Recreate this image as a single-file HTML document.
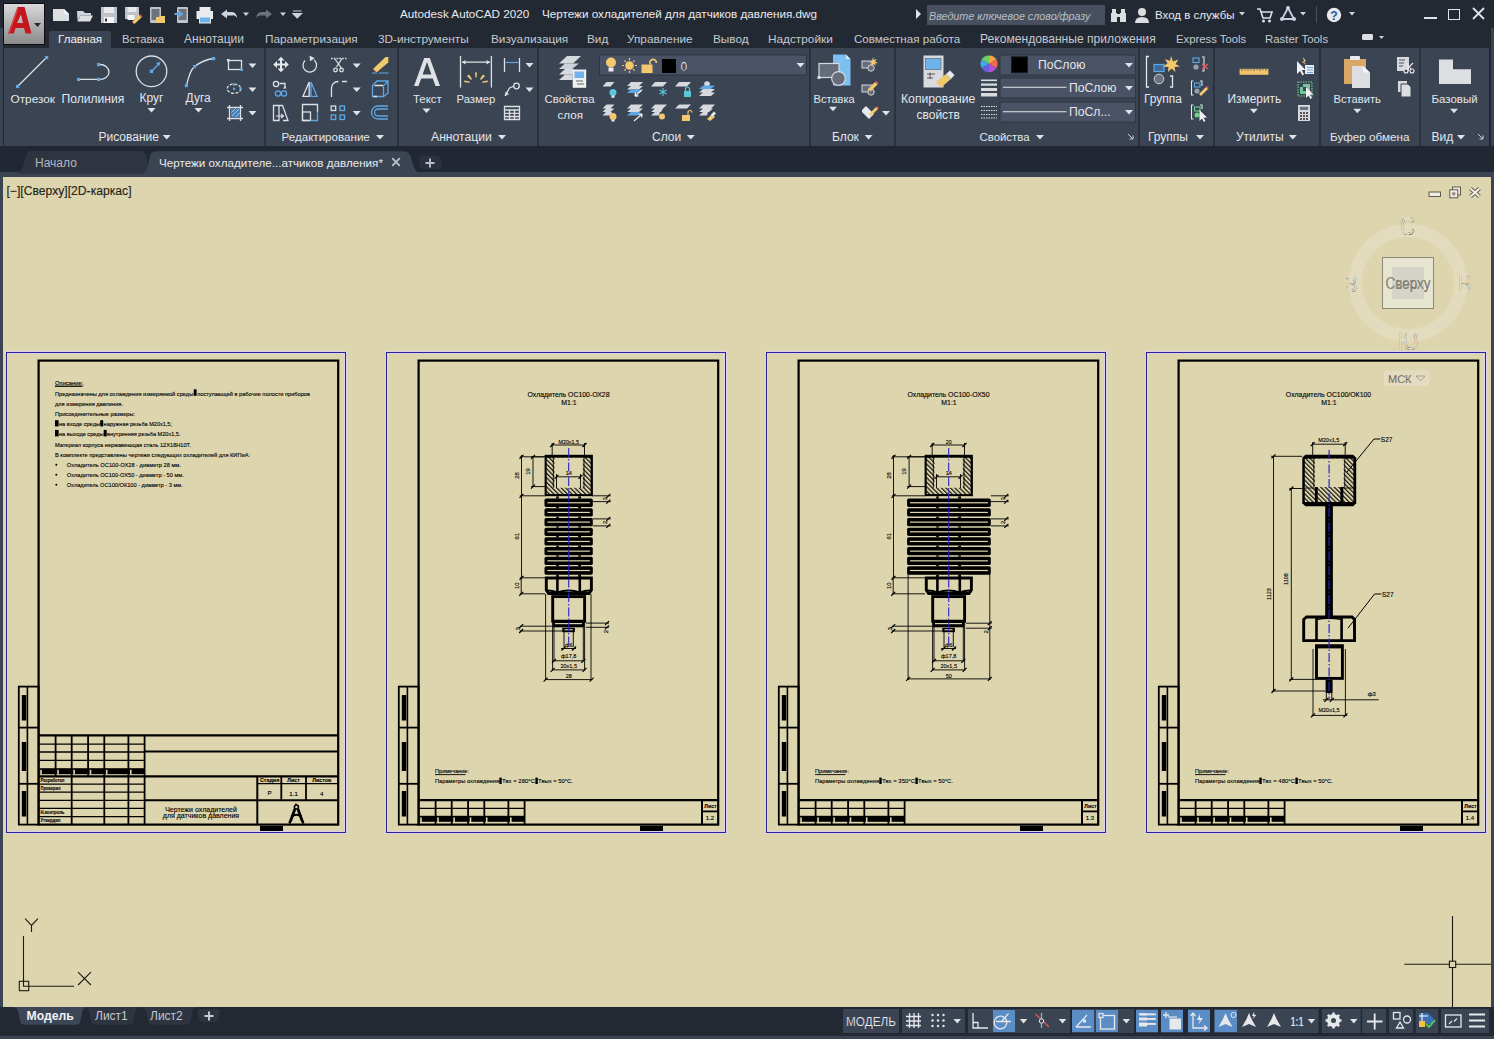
<!DOCTYPE html>
<html><head><meta charset="utf-8">
<style>
*{margin:0;padding:0;box-sizing:border-box}
html,body{width:1494px;height:1039px;overflow:hidden;background:#222833;font-family:"Liberation Sans",sans-serif}
.a{position:absolute}
.t{position:absolute;white-space:nowrap;color:#e3e6eb;font-size:12px;line-height:14px}
#title{left:0;top:0;width:1494px;height:28px;background:#232933}
#tabs{left:0;top:28px;width:1494px;height:20px;background:#232933}
#ribbon{left:4px;top:48px;width:1485px;height:98px;background:#3b4453}
#strip{left:0;top:146px;width:1494px;height:31px;background:#222833}
#frame{left:0;top:172px;width:1494px;height:835px;background:#3b4453}
#vp{left:3px;top:177px;width:1488px;height:830px;background:#ddd5ae}
#bottom{left:0;top:1007px;width:1494px;height:29px;background:#232933}
#bstrip{left:0;top:1036px;width:1494px;height:3px;background:#3b4453}
.sep{position:absolute;top:48px;width:2px;height:98px;background:#2c323d}
.pl{position:absolute;top:130px;font-size:12px;line-height:14px;color:#e3e6eb;white-space:nowrap}
.tri{position:absolute;width:0;height:0;border-left:4px solid transparent;border-right:4px solid transparent;border-top:5px solid #dfe3e8}
.tab{position:absolute;top:32px;font-size:12px;line-height:14px;color:#c4c9d1;white-space:nowrap}
.lb{position:absolute;font-size:12px;line-height:14px;color:#e3e6eb;white-space:nowrap}

</style></head><body>
<div id="title" class="a"></div>
<div id="tabs" class="a"></div>
<div class="a" style="left:0;top:28px;width:3px;height:979px;background:#3b4453"></div>
<div class="a" style="right:0;top:28px;width:3px;height:979px;background:#3b4453"></div>
<div id="ribbon" class="a"></div>
<div id="strip" class="a"></div>
<div id="frame" class="a"></div>
<div id="vp" class="a"></div>
<div id="bottom" class="a"></div>
<div id="bstrip" class="a"></div>
<!-- title bar -->
<div class="a" style="left:3px;top:3px;width:42px;height:42px;background:#0c0e12"></div>
<div class="a" style="left:4px;top:4px;width:40px;height:40px;background:linear-gradient(#d9d9d9,#a9a9a9 60%,#8a8a8a)"></div>
<svg class="a" style="left:4px;top:4px" width="40" height="41" viewBox="0 0 40 41">
<path d="M4 29.5 L13.5 3 L20.5 3 L27.5 29.5 L21.5 29.5 L20 24 L11.5 24 L9.8 29.5 Z M13 19 L19 19 L17 10.5 Z" fill="#c4161c"/>
<path d="M5 29 L14 4.5" stroke="#f07070" stroke-width="1.4" opacity=".5"/>
<path d="M30 19 L37 19 L33.5 23 Z" fill="#2a2a2a"/>
</svg>
<div class="t" style="left:400px;top:7px;font-size:11.7px;color:#e8eaee">Autodesk AutoCAD 2020</div>
<div class="t" style="left:542px;top:7px;font-size:11.7px;color:#e8eaee">Чертежи охладителей для датчиков давления.dwg</div>
<svg class="a" style="left:916px;top:9px" width="6" height="10"><path d="M0 0 L5 5 L0 10Z" fill="#e0e3e8"/></svg>
<div class="a" style="left:927px;top:5px;width:178px;height:20px;background:#48505f"></div>
<div class="t" style="left:929px;top:8.5px;font-size:10.75px;font-style:italic;color:#b9bec6">Введите ключевое слово/фразу</div>
<div class="t" style="left:1155px;top:8px;font-size:11.5px;color:#e8eaee">Вход в службы</div>
<!-- window buttons -->
<div class="a" style="left:1424px;top:17px;width:13px;height:2px;background:#e0e3e8"></div>
<div class="a" style="left:1448px;top:9px;width:12px;height:11px;border:1.5px solid #e0e3e8"></div>
<svg class="a" style="left:1472px;top:7px" width="13" height="13"><path d="M1 1 L12 12 M12 1 L1 12" stroke="#e0e3e8" stroke-width="1.8"/></svg>
<div class="a" style="left:1316px;top:6px;width:1px;height:17px;background:#4a505c"></div>
<!-- tabs -->
<div class="a" style="left:49px;top:31px;width:62px;height:17px;background:#3b4453;border-radius:2px 2px 0 0"></div>
<div class="tab" style="left:58px;color:#f0f2f5;font-size:11.6px">Главная</div>
<div class="tab" style="left:122px;font-size:11.3px">Вставка</div>
<div class="tab" style="left:184px">Аннотации</div>
<div class="tab" style="left:265px;font-size:11.8px">Параметризация</div>
<div class="tab" style="left:378px;font-size:11.8px">3D-инструменты</div>
<div class="tab" style="left:491px;font-size:11.8px">Визуализация</div>
<div class="tab" style="left:587px;font-size:11.8px">Вид</div>
<div class="tab" style="left:627px;font-size:11.8px">Управление</div>
<div class="tab" style="left:713px;font-size:11.8px">Вывод</div>
<div class="tab" style="left:768px;font-size:11.8px">Надстройки</div>
<div class="tab" style="left:854px;font-size:11.6px">Совместная работа</div>
<div class="tab" style="left:980px;font-size:12.1px">Рекомендованные приложения</div>
<div class="tab" style="left:1176px;font-size:11.3px">Express Tools</div>
<div class="tab" style="left:1265px;font-size:11.4px">Raster Tools</div>
<!-- separators -->
<div class="sep" style="left:264px"></div>
<div class="sep" style="left:397px"></div>
<div class="sep" style="left:537px"></div>
<div class="sep" style="left:809px"></div>
<div class="sep" style="left:894px"></div>
<div class="sep" style="left:1138px"></div>
<div class="sep" style="left:1213px"></div>
<div class="sep" style="left:1319px"></div>
<div class="sep" style="left:1419px"></div>
<!-- file tabs -->
<svg class="a" style="left:0;top:140px" width="460" height="40" viewBox="0 140 460 40">
<path d="M13 174 C20 174 22 171 23.5 165 L26 156 C27 152 29 151 33 151 H139 C144 151 146 153 146.5 157 L148 165 C149.5 171 151 174 157 174Z" fill="#2f3540"/>
<path d="M138 177 V174 C145 174 147 171 148 165 L150 156 C151 152 153 151.2 157 151.2 H403 C407 151.2 409 152.5 410.5 156 L413 164 C415 171 418 174 425 174 V177Z" fill="#3b4453"/>
<path d="M422 156 H436 C439 156 440 158 441 161 L442 166 C442.5 168.5 441 169 438 169 H424 C421 169 420 167 419.5 165 L419 160 C419 157 420 156 422 156Z" fill="#2c323d"/>
</svg>
<div class="t" style="left:35px;top:156px;color:#b3b8c0">Начало</div>
<div class="t" style="left:159px;top:156px;font-size:11.65px;color:#e8eaee">Чертежи охладителе...атчиков давления*</div>
<svg class="a" style="left:391px;top:157px" width="10" height="10"><path d="M1.2 1.2 L8.8 8.8 M8.8 1.2 L1.2 8.8" stroke="#b9bfc8" stroke-width="1.9"/></svg>
<svg class="a" style="left:425px;top:157.5px" width="10" height="10"><path d="M5 0.5 V9.5 M0.5 5 H9.5" stroke="#b9bfc8" stroke-width="1.9"/></svg>
<!-- layout tabs -->
<svg class="a" style="left:0;top:1007px" width="240" height="20" viewBox="0 1007 240 20">
<path d="M12 1007 C16 1007 17.5 1009 18.5 1013 L20 1021 C21 1024 22.5 1024.7 25 1024.7 H76 C78.5 1024.7 79.5 1024 80.5 1021 L82 1013 C83 1009 84 1007 88 1007Z" fill="#3d4657"/>
<path d="M83 1007 C87 1007 88.5 1009 89.5 1013 L91 1021 C92 1024 93.5 1024.7 96 1024.7 H129 C131.5 1024.7 132.5 1024 133.5 1021 L135 1013 C136 1009 137 1007 141 1007Z" fill="#2f3540"/>
<path d="M140 1007 C144 1007 145.5 1009 146.5 1013 L148 1021 C149 1024 150.5 1024.7 153 1024.7 H186 C188.5 1024.7 189.5 1024 190.5 1021 L192 1013 C193 1009 194 1007 198 1007Z" fill="#2f3540"/>
<path d="M199 1009 H217 C219.5 1009 220 1010 219.5 1012 L218.5 1018 C218 1021 216.5 1022 214 1022 H203 C200.5 1022 199.5 1021 199 1018 L198 1012 C197.5 1010 198 1009 199 1009Z" fill="#2f3540"/>
</svg>
<div class="t" style="left:26.5px;top:1009px;font-weight:bold;color:#f0f2f5;font-size:12.2px">Модель</div>
<div class="t" style="left:95px;top:1009px;color:#c4c9d1">Лист1</div>
<div class="t" style="left:150px;top:1009px;color:#c4c9d1">Лист2</div>
<svg class="a" style="left:204px;top:1010.5px" width="10" height="10"><path d="M5 0.5 V9.5 M0.5 5 H9.5" stroke="#c9ced6" stroke-width="1.9"/></svg>

<svg class="a" style="left:0;top:0" width="1494" height="150" viewBox="0 0 1494 150">
<g fill="none" stroke="#dcdfe4" stroke-width="1.3">
<!-- Otrezok -->
<path d="M18 86 L46.5 57.5"/>
<!-- Polyline -->
<path d="M79 79.4 H98.5 M100 64.5 A9 7.45 0 0 1 100 79.4"/>
<!-- circle -->
<circle cx="151.5" cy="71.3" r="15.3"/>
<path d="M152 71 L159 63.5" stroke="#5ea8e6"/>
<!-- arc -->
<path d="M186.5 85.5 Q190 70 194.5 66.5 Q203 60 213.5 58.5"/>
<!-- rect -->
<rect x="228.5" y="60.5" width="13" height="9"/>
<!-- ellipse -->
<ellipse cx="234" cy="88.7" rx="6.8" ry="4.6" stroke-dasharray="3 1.5"/>
<!-- hatch -->
<path d="M229.5 105 V121 M240.5 105 V121 M227 107.5 H243 M227 118.5 H243"/>
</g>
<g fill="#5ea8e6">
<rect x="45" y="56" width="3.2" height="3.2"/><rect x="16" y="84.8" width="3.2" height="3.2"/>
<rect x="77" y="77.8" width="3.2" height="3.2"/><rect x="97" y="77.8" width="3.2" height="3.2"/><rect x="97" y="63" width="3.2" height="3.2"/>
<rect x="149.8" y="69.6" width="3.4" height="3.4"/><path d="M160.5 61.8 L156 63 L159.3 66.3Z"/>
<rect x="184.8" y="84" width="3.2" height="3.2"/><rect x="193" y="65" width="3.2" height="3.2"/><rect x="212" y="57" width="3.2" height="3.2"/>
<rect x="227" y="59" width="2.5" height="2.5" fill="#dcdfe4"/><rect x="240.5" y="68.5" width="2.5" height="2.5"/>
<rect x="233" y="87.7" width="2.2" height="2.2"/><rect x="233" y="83.5" width="2.2" height="2.2"/><rect x="239.5" y="87.7" width="2.2" height="2.2"/>
<rect x="231" y="108.5" width="9" height="9" fill="#4a82b8"/>
</g>
<path d="M232 116 L239 109 M231.5 112.5 L235.5 108.5 M235.5 117 L240 112.5" stroke="#9cc7ee" stroke-width="1"/>
<path d="M147.5 108.0 L155.5 108.0 L151.5 112.5Z" fill="#dfe3e8"/><path d="M194.5 108.0 L202.5 108.0 L198.5 112.5Z" fill="#dfe3e8"/>
<path d="M248.5 63.5 L256.5 63.5 L252.5 68.0Z" fill="#dfe3e8"/><path d="M248.5 87.5 L256.5 87.5 L252.5 92.0Z" fill="#dfe3e8"/><path d="M248.5 111.0 L256.5 111.0 L252.5 115.5Z" fill="#dfe3e8"/>
<!-- Edit panel -->
<g fill="#e6e8ec">
<path d="M281 56.8 L284.5 60.5 H282 V63.5 H285 V61 L288.8 64.5 L285 68 V65.5 H282 V68.5 H284.5 L281 72.2 L277.5 68.5 H280 V65.5 H277 V68 L273.2 64.5 L277 61 V63.5 H280 V60.5 H277.5Z"/>
</g>
<g fill="none" stroke="#dcdfe4" stroke-width="1.3">
<path d="M314 60 A6.8 6.8 0 1 1 305 60.5"/>
<path d="M331 58.5 H346.5" stroke-dasharray="1.6 1.2"/>
<path d="M335 59 L342 69 M342 58.5 L336.5 67"/><circle cx="335.5" cy="70" r="1.8"/><circle cx="341.5" cy="70" r="1.8"/>
<circle cx="276" cy="84" r="2.6"/><path d="M279.5 83.5 H285 V88"/>
<path d="M303 96.3 L309.2 82 V96.3Z"/>
<path d="M331.5 97 V88 A6.5 6.5 0 0 1 338.5 81.5 M342 81.5 H347"/>
<path d="M273.5 105.5 H279 V120.5 H273.5Z M279 105.5 H282.5 L288 120.5 H283"/><path d="M276 116 H283 M281 114 L283.5 116 L281 118" stroke-width="1.2"/>
<path d="M317.5 112 V104.5 H302.5 V120.5 H309"/>
<rect x="302.5" y="112" width="8" height="8.5"/>
<rect x="331.2" y="106" width="4.5" height="4.5"/>
</g>
<g fill="none" stroke="#5ea8e6" stroke-width="1.3">
<circle cx="278" cy="93.5" r="2.6"/><circle cx="284" cy="93.5" r="2.6"/>
<path d="M311 82 L317 96.3 H311Z"/>
<path d="M372.5 85.5 V96.5 H383.5 V85.5 M383.5 85.5 L388 81.5 V93 L383.5 96.5 M372.5 85.5 L377 81 H388"/>
<path d="M317.5 112 V120.5 H310.5"/>
<rect x="340" y="106" width="4.5" height="4.5"/><rect x="331.2" y="115" width="4.5" height="4.5"/><rect x="340" y="115" width="4.5" height="4.5"/>
<path d="M388 106 H378 A6.3 6.3 0 0 0 378 119 H388 M388 109 H378 A3.3 3.3 0 0 0 378 116 H388"/>
</g>
<path d="M373.5 96.5 H377 M374.5 85.5 H383" stroke="#dcdfe4" stroke-width="1.3"/>
<circle cx="376.5" cy="70" r="2.2" fill="#e2555f"/>
<path d="M373 69 L385.5 57 L388.3 57 V62.5 L377 72Z" fill="#f0c96a"/>
<path d="M372 73 H377 M379 73 H388.5" stroke="#5ea8e6" stroke-width="1.2"/>
<path d="M283 88.5 L284.8 86 L286.6 88.5Z" fill="#dcdfe4"/>
<path d="M309.5 55.5 L314.8 58.2 L310 61.2Z" fill="#dcdfe4"/>
<path d="M352.7 63.5 L360.7 63.5 L356.7 68.0Z" fill="#dfe3e8"/><path d="M352.7 87.5 L360.7 87.5 L356.7 92.0Z" fill="#dfe3e8"/><path d="M352.7 111.0 L360.7 111.0 L356.7 115.5Z" fill="#dfe3e8"/>
<!-- Annotations -->
<path d="M414 86 L424.2 58 H429.8 L440 86 H435.5 L432.8 78.5 H421.2 L418.5 86Z M422.6 74.5 H431.4 L427 62Z" fill="#dfe1e5"/>
<g fill="none" stroke="#dcdfe4" stroke-width="1.3">
<path d="M460.5 56 V87.5 M491.4 56 V87.5 M462 62.2 H490"/>
<path d="M504.5 58 V72 M519.5 58 V72"/>
<path d="M505 96 L509.5 88 L514 86"/><circle cx="516.5" cy="86" r="2.8"/>
<path d="M504.5 106.5 H519.5 V119.5 H504.5Z M504.5 110 H519.5 M504.5 113.3 H519.5 M504.5 116.5 H519.5 M509.5 110 V119.5 M514.5 110 V119.5"/>
</g>
<path d="M462 62.2 L465.5 60 V64.4Z M490 62.2 L486.5 60 V64.4Z" fill="#dcdfe4"/>
<path d="M505 96.3 L505.5 91.5 L509 94Z" fill="#dcdfe4"/>
<path d="M505.5 62.5 H518.5" stroke="#5ea8e6" stroke-width="1.2"/>
<g fill="#f2c978"><path d="M475 72.5 L477 72.5 L476.5 77.5 L475.5 77.5Z"/><path d="M467 76 L469 74.5 L472 79 L471 80Z"/><path d="M485 76 L483 74.5 L480 79 L481 80Z"/><path d="M464 82 L464.5 80.5 L469.5 81.5 L469.5 83Z"/><path d="M488 82 L487.5 80.5 L482.5 81.5 L482.5 83Z"/></g>
<path d="M422.5 108.4 L430.5 108.4 L426.5 112.9Z" fill="#dfe3e8"/><path d="M525.5 63.0 L533.5 63.0 L529.5 67.5Z" fill="#dfe3e8"/><path d="M525.5 87.5 L533.5 87.5 L529.5 92.0Z" fill="#dfe3e8"/>
<!-- Layers -->
<g fill="#d6d9de">
<path d="M559 63.5 L567 56 H581 L573 63.5Z"/><path d="M559 69 L565 63.5 H579 L572 69Z" opacity=".95"/><path d="M559 74.5 L565 69 H574 V74.5Z"/><path d="M559 80 L565 74.5 H572.7 V80Z"/>
<rect x="572.7" y="69.5" width="13.5" height="18.3" fill="#eef0f2"/>
</g>
<rect x="574.5" y="71.5" width="9.5" height="6.5" fill="#6fb3ec"/>
<path d="M576 81 H583 M577 84 H584" stroke="#555" stroke-width=".9"/>
<rect x="599.5" y="55" width="207" height="20" fill="#4a5365" stroke="#2e3440" stroke-width="1"/>
<circle cx="611" cy="62.5" r="5" fill="#f4c96e"/><rect x="608.5" y="67.5" width="5" height="4" fill="#e8eaee"/>
<circle cx="629.5" cy="65.5" r="4.3" fill="#f4c96e"/><g stroke="#f4c96e" stroke-width="1.2"><path d="M629.5 58 V60 M629.5 71 V73 M622 65.5 H624 M635 65.5 H637 M624.5 60.5 L625.8 61.8 M633.2 69.2 L634.5 70.5 M634.5 60.5 L633.2 61.8 M625.8 69.2 L624.5 70.5"/></g>
<rect x="641.5" y="64.5" width="11" height="8.5" fill="#f4c96e"/><path d="M650 64.5 V61.5 A3.3 3.3 0 0 1 656.2 61.5 V63" fill="none" stroke="#f4c96e" stroke-width="1.6"/>
<rect x="662" y="59" width="14" height="14" fill="#000"/>
<text x="680.5" y="70.5" font-family="Liberation Sans" font-size="12" fill="#e8eaee">0</text>
<path d="M796.5 63.0 L804.5 63.0 L800.5 67.5Z" fill="#dfe3e8"/>
<g fill="#d6d9de">
<path d="M602.5 86.5 L606.5 82 H614.5 L610.5 86.5Z"/><path d="M627 86 L631 82 H643 L639 86Z M627 89.5 L631 86 H643 L639 89.5Z"/><path d="M651 86.5 L655 82 H667 L663 86.5Z"/><path d="M675 86.5 L679 82 H691 L687 86.5Z"/>
<circle cx="707" cy="84" r="2.8"/>
<path d="M602.5 108.5 L606.5 104.5 H614.5 L610.5 108.5Z M602.5 112 L606 108.5 H614.5 L610.5 112Z M602.5 115.5 L606 112 H612 L610.5 115.5Z"/>
<path d="M627 108.5 L631 104.5 H643 L639 108.5Z M627 112 L631 108.5 H643 L639 112Z"/>
<path d="M651 108.5 L655 104.5 H667 L663 108.5Z M651 112 L655 108.5 H663 L661 112Z M651 115.5 L655 112 H660 L659 115.5Z"/>
<path d="M675 108.5 L679 104.5 H691 L687 108.5Z"/>
<path d="M699 108.5 L703 104.5 H715 L711 108.5Z M699 112 L703 108.5 H713 L709 112Z M699 115.5 L703 112 H708 L707 115.5Z"/>
</g>
<g fill="#5ea8e6"><path d="M627 93 L631 89.5 H643 L639 93Z"/><path d="M627 115.5 L631 112 H640 L638 115.5Z"/><path d="M699 89 L703 85.5 H715 L711 89Z"/></g>
<path d="M699 92.5 L703 89 H715 L711 92.5Z M699 96 L703 92.5 H715 L711 96Z" fill="#d6d9de"/>
<circle cx="613" cy="92.5" r="3.5" fill="#5bc8d8"/><rect x="611.5" y="95.5" width="3" height="2.2" fill="#e8eaee"/>
<path d="M642 90 L635 96 M635 96 L635.5 92.5 M635 96 L638.5 95.8" stroke="#e8eaee" stroke-width="1.3" fill="none"/>
<g stroke="#5bc8d8" stroke-width="1.1"><path d="M663 88 V96 M659.5 90 L666.5 94 M666.5 90 L659.5 94"/></g>
<rect x="684" y="91" width="7" height="6" fill="#5bc8d8"/><path d="M685.5 91 V89 A2 2 0 0 1 689.5 89 V91" fill="none" stroke="#5bc8d8" stroke-width="1.2"/>
<circle cx="613" cy="116.5" r="3.5" fill="#f4c96e"/><rect x="611.5" y="119.5" width="3" height="2" fill="#e8eaee"/>
<path d="M634 121 L642 114 M642 114 L638.5 114.3 M642 114 L641.7 117.5" stroke="#e8eaee" stroke-width="1.3" fill="none"/>
<circle cx="662" cy="116.5" r="3" fill="#f4c96e"/>
<rect x="682" y="115" width="8" height="6" fill="#f4c96e"/><path d="M688 115 V112.5 A2 2 0 0 1 692 112.5" fill="none" stroke="#f4c96e" stroke-width="1.2"/>
<path d="M707 119 L712 114 L715 117 L710 121Z" fill="#f4c96e"/><path d="M711 114.5 L714 111.5 L716 113.5 L713 116.5Z" fill="#e8eaee"/>
<!-- Block -->
<path d="M833 54.5 H846 L850.5 59 V85.5 H833Z" fill="#7cc0f2"/>
<path d="M846 54.5 V59 H850.5Z" fill="#cfe6f8"/>
<rect x="819" y="63.5" width="20" height="14" fill="#666d7a" stroke="#d6d9de" stroke-width="1.2"/>
<circle cx="838.5" cy="78.5" r="6.8" fill="#666d7a" stroke="#d6d9de" stroke-width="1.2"/>
<rect x="817.5" y="76" width="3" height="3" fill="#d6d9de"/>
<g transform="translate(861,57)"><rect x="1" y="4" width="10" height="7" fill="#666d7a" stroke="#d6d9de" stroke-width="1"/><circle cx="10" cy="11" r="3.2" fill="#666d7a" stroke="#d6d9de" stroke-width="1"/><path d="M12 0 L13 3 L16 2 L14 4.5 L17 6 L14 6.5 L15 9 L12.5 7 L11 9 L11 6 L8 6 L11 4.5 Z" fill="#f4c96e"/></g>
<g transform="translate(861,81)"><rect x="1" y="4" width="10" height="7" fill="#666d7a" stroke="#d6d9de" stroke-width="1"/><circle cx="10" cy="11" r="3.2" fill="#666d7a" stroke="#d6d9de" stroke-width="1"/><path d="M7 8 L14 1 L16.5 3.5 L9.5 10.5Z" fill="#f4c96e"/><path d="M14 1 L16.5 3.5 L17.5 2 L15.5 0Z" fill="#e2555f"/></g>
<g transform="translate(861,105)"><path d="M1 5 L5 1 L13 9 L8 14 L1 7Z" fill="#e6e8ec"/><path d="M8 9 L15 2 L17 4 L10 11Z" fill="#f4c96e"/><path d="M15 2 L17 4 L18 3 L16 1Z" fill="#e2555f"/></g>
<path d="M829.0 106.8 L837.0 106.8 L833.0 111.3Z" fill="#dfe3e8"/><path d="M882.0 111.0 L890.0 111.0 L886.0 115.5Z" fill="#dfe3e8"/>
<!-- Properties -->
<rect x="923.5" y="55.5" width="20" height="32" fill="#d9dbde"/>
<rect x="925.5" y="58.5" width="15.5" height="11" fill="#6fb3ec" stroke="#555" stroke-width=".6"/>
<path d="M927 74 H935 M927 78 H933 M930 72.5 V79" stroke="#555" stroke-width="1"/>
<path d="M936 82 L946 74 L951 79 L941 87.5Z" fill="#f0c96a"/><path d="M946 74 L950 70.5 L954.5 75 L951 79Z" fill="#e8eaee"/>
<g transform="translate(989,63.8)">
<path d="M0 0 L0 -8.4 A8.4 8.4 0 0 1 7.3 -4.2Z" fill="#f7a541"/><path d="M0 0 L7.3 -4.2 A8.4 8.4 0 0 1 7.3 4.2Z" fill="#f06a4b"/><path d="M0 0 L7.3 4.2 A8.4 8.4 0 0 1 0 8.4Z" fill="#b64fd0"/><path d="M0 0 L0 8.4 A8.4 8.4 0 0 1 -7.3 4.2Z" fill="#6a5be6"/><path d="M0 0 L-7.3 4.2 A8.4 8.4 0 0 1 -7.3 -4.2Z" fill="#3fa8e8"/><path d="M0 0 L-7.3 -4.2 A8.4 8.4 0 0 1 0 -8.4Z" fill="#6cd06a"/>
</g>
<g fill="#d9dbde"><rect x="981" y="79.5" width="16" height="1.6"/><rect x="981" y="83.5" width="16" height="2.2"/><rect x="981" y="88" width="16" height="3"/><rect x="981" y="93" width="16" height="3.5"/></g>
<g stroke="#d9dbde" stroke-width="1" stroke-dasharray="1.5 1"><path d="M981 106.5 H997 M981 110.5 H997 M981 114.5 H997 M981 118 H997"/></g>
<rect x="1000" y="55" width="135.5" height="20" fill="#4a5365" stroke="#2e3440" stroke-width="1"/>
<rect x="1000" y="78" width="135.5" height="20" fill="#4a5365" stroke="#2e3440" stroke-width="1"/>
<rect x="1000" y="102" width="135.5" height="20" fill="#4a5365" stroke="#2e3440" stroke-width="1"/>
<rect x="1011.5" y="56.8" width="16" height="16" fill="#000" stroke="#1a1d22" stroke-width="1"/>
<path d="M1003 87.2 H1066.5 M1003 111.7 H1066.5" stroke="#e3e6eb" stroke-width="1.1"/>
<path d="M1125.0 63.0 L1133.0 63.0 L1129.0 67.5Z" fill="#dfe3e8"/><path d="M1125.0 86.0 L1133.0 86.0 L1129.0 90.5Z" fill="#dfe3e8"/><path d="M1125.0 110.0 L1133.0 110.0 L1129.0 114.5Z" fill="#dfe3e8"/>
<path d="M1128 134 L1133 139 M1133 135.5 V139 H1129.5" stroke="#c9ced6" stroke-width="1" fill="none"/>
<!-- Groups -->
<path d="M1149 56.5 H1146.5 V87 H1149 M1170 76 H1172.5 V87 H1170" stroke="#e3e6eb" stroke-width="1.3" fill="none"/>
<rect x="1154" y="64.5" width="10" height="7" fill="#3b6a9a" stroke="#5ea8e6" stroke-width="1.2"/>
<circle cx="1159" cy="79" r="4.8" fill="#6c727e" stroke="#c9ced6" stroke-width="1"/>
<path d="M1171 56 L1173 61.5 L1178.5 59.5 L1175.5 64 L1180 66.5 L1174.5 67 L1175.5 72 L1171.5 68.5 L1168 72 L1168.5 67 L1163 66.5 L1167.5 63.5 L1165 59 L1170 61 Z" fill="#f4c96e"/>
<g transform="translate(1192,57)"><rect x="1" y="1" width="6" height="4.5" fill="none" stroke="#5ea8e6" stroke-width="1.1"/><circle cx="4" cy="10" r="2.6" fill="#9aa0aa"/><path d="M10 0 H12 V14 H10" stroke="#e3e6eb" stroke-width="1.1" fill="none"/><path d="M10 7 L16 12 M16 7 L10 12" stroke="#e2555f" stroke-width="1.5"/></g>
<g transform="translate(1191,81)"><path d="M2.5 0 H0.5 V14 H2.5 M9 0 H11 V5" stroke="#e3e6eb" stroke-width="1.1" fill="none"/><rect x="3.5" y="2" width="5.5" height="4" fill="none" stroke="#5ea8e6" stroke-width="1.1"/><circle cx="6" cy="10" r="2.5" fill="#9aa0aa"/><path d="M8 13 L15 6 L17 8 L10 15Z" fill="#f4c96e"/><path d="M15 6 L17 8 L18 7 L16 5Z" fill="#e2555f"/></g>
<g transform="translate(1191,105)"><path d="M2.5 0 H0.5 V14 H2.5 M9 0 H11 V4" stroke="#e3e6eb" stroke-width="1.1" fill="none"/><rect x="3.5" y="2" width="5.5" height="4" fill="none" stroke="#6ccf8a" stroke-width="1.1"/><circle cx="6" cy="10" r="2.5" fill="#6ccf8a"/><path d="M8.5 5 L8.5 16 L11 13.5 L13 17 L14.5 16 L12.5 12.8 L16 12.5Z" fill="#f0f2f4"/></g>
<!-- Utilities -->
<rect x="1239.6" y="68.8" width="28.8" height="6" fill="#f2c36e"/>
<path d="M1242 68.8 V71 M1245 68.8 V70.2 M1248 68.8 V71 M1251 68.8 V70.2 M1254 68.8 V71 M1257 68.8 V70.2 M1260 68.8 V71 M1263 68.8 V70.2 M1266 68.8 V71" stroke="#3b4453" stroke-width=".8"/>
<path d="M1249.8 108.7 L1257.8 108.7 L1253.8 113.2Z" fill="#dfe3e8"/>
<g transform="translate(1297,57)"><path d="M0 4 L0 17 L3 14 L5.5 18.5 L7 17.5 L4.8 13 L8.5 13Z" fill="#f0f2f4"/><rect x="8" y="8" width="9" height="9" fill="#e8eaee"/><path d="M10 10.5 H16 M10 13 H16 M10 15.5 H16" stroke="#5ea8e6" stroke-width="1"/><path d="M6 0 L9 4 L7 5 L10 8 L5 5 L7 4.2Z" fill="#f4c96e"/></g>
<g transform="translate(1297,81)"><rect x="1" y="1" width="14" height="14" fill="none" stroke="#6ccf8a" stroke-width="1.1" stroke-dasharray="1.5 1"/><path d="M3 13 V6 H6 V10 H10 V13Z M6 6 V3 H13 V10 H10 V6Z" fill="#74c69a"/><path d="M9 6 L9 17 L11.5 14.5 L13.5 18 L15 17 L13 13.8 L16.5 13.5Z" fill="#f0f2f4"/></g>
<g transform="translate(1298,105)"><rect x="0" y="0" width="12" height="16" fill="#d6d9de"/><rect x="1.8" y="1.8" width="8.4" height="3.2" fill="#6c727e"/><g fill="#555"><rect x="2" y="7" width="2" height="2"/><rect x="5" y="7" width="2" height="2"/><rect x="8" y="7" width="2" height="2"/><rect x="2" y="10" width="2" height="2"/><rect x="5" y="10" width="2" height="2"/><rect x="8" y="10" width="2" height="2"/><rect x="2" y="13" width="2" height="2"/><rect x="5" y="13" width="2" height="2"/><rect x="8" y="13" width="2" height="2"/></g></g>
<!-- Clipboard -->
<rect x="1344" y="59" width="22" height="25" fill="#d9a766"/>
<rect x="1350" y="56" width="10" height="4" rx="1" fill="#e8eaee"/>
<path d="M1352 66 H1363 L1370 72.5 V88 H1352Z" fill="#dcdee2"/><path d="M1363 66 V72.5 H1370Z" fill="#f4f5f7"/>
<g transform="translate(1397,57)"><rect x="0" y="0" width="12" height="14" fill="#d6d9de"/><path d="M2 3 H8 M2 6 H7 M2 9 H6" stroke="#555" stroke-width="1"/><circle cx="9" cy="14" r="2" fill="#3b4453" stroke="#e8eaee" stroke-width="1.1"/><circle cx="15" cy="14" r="2" fill="#3b4453" stroke="#e8eaee" stroke-width="1.1"/><path d="M9 6 L14 12 M16 6 L10 12" stroke="#e8eaee" stroke-width="1.1"/></g>
<g transform="translate(1398,81)"><rect x="0" y="0" width="9" height="11" fill="#d6d9de"/><path d="M3 3 H10 L13 6 V16 H3Z" fill="#dcdee2" stroke="#3b4453" stroke-width="1"/></g>
<path d="M1353.3 108.7 L1361.3 108.7 L1357.3 113.2Z" fill="#dfe3e8"/>
<!-- View -->
<path d="M1439 59.5 H1453 V69.3 H1471 V84 H1439Z" fill="#dcdee2"/>
<path d="M1450.0 108.7 L1458.0 108.7 L1454.0 113.2Z" fill="#dfe3e8"/>
<path d="M1478 134 L1483 139 M1483 135.5 V139 H1479.5" stroke="#c9ced6" stroke-width="1" fill="none"/>
<!-- panel title triangles -->
<path d="M162.7 135.0 L170.7 135.0 L166.7 139.5Z" fill="#dfe3e8"/><path d="M376.0 135.0 L384.0 135.0 L380.0 139.5Z" fill="#dfe3e8"/><path d="M498.0 135.0 L506.0 135.0 L502.0 139.5Z" fill="#dfe3e8"/><path d="M686.8 135.0 L694.8 135.0 L690.8 139.5Z" fill="#dfe3e8"/><path d="M864.6 135.0 L872.6 135.0 L868.6 139.5Z" fill="#dfe3e8"/><path d="M1036.0 135.0 L1044.0 135.0 L1040.0 139.5Z" fill="#dfe3e8"/><path d="M1196.0 135.0 L1204.0 135.0 L1200.0 139.5Z" fill="#dfe3e8"/><path d="M1288.8 135.0 L1296.8 135.0 L1292.8 139.5Z" fill="#dfe3e8"/><path d="M1457.0 135.0 L1465.0 135.0 L1461.0 139.5Z" fill="#dfe3e8"/>
<!-- QAT icons -->
<path d="M53 9 H64 L69 14 V21 H53Z" fill="#dcdee2"/><path d="M64 9 V14 H69Z" fill="#f4f5f7"/>
<path d="M77 11 H83 L85 13 H91 V15.5 H80.5 L77.5 21Z" fill="#cfd2d7"/><path d="M80.5 15.5 H93 L90 21.5 H77.5Z" fill="#dcdee2"/>
<path d="M101 7 H117 V23 H101Z" fill="#bfc3c9"/><rect x="104" y="7" width="10" height="6" fill="#e8eaee"/><rect x="104" y="17" width="10" height="6" fill="#f4f5f7"/><rect x="105" y="18.5" width="2" height="3" fill="#333"/>
<path d="M125 7 H139 V19 H125Z" fill="#bfc3c9"/><rect x="127.5" y="7" width="9" height="5" fill="#e8eaee"/><rect x="127.5" y="15" width="7" height="5" fill="#f4f5f7"/><path d="M132 22 L139 15 L141.5 17.5 L134.5 24Z" fill="#f0c96a"/><path d="M139 15 L141.5 17.5 L142.5 16.5 L140 14Z" fill="#e2555f"/>
<rect x="150" y="7" width="11" height="16" rx="1" fill="#bfc3c9"/><rect x="151.5" y="9" width="8" height="11" fill="#6c727e"/><path d="M156 17 H159 L160 16 H165 V23 H156Z" fill="#f0c96a"/>
<rect x="177" y="7" width="11" height="16" rx="1" fill="#bfc3c9"/><rect x="178.5" y="9" width="8" height="11" fill="#6c727e"/><path d="M174.5 14 H181 M179 11.5 L182 14 L179 16.5" stroke="#5ea8e6" stroke-width="1.8" fill="none"/>
<path d="M199.5 7 H210.5 V11 H199.5Z" fill="#e8eaee"/><path d="M196.5 11 H213 V19 H196.5Z" fill="#e8eaee"/><rect x="199.5" y="17" width="11" height="6" fill="#6fb3ec" stroke="#e8eaee" stroke-width="1"/>
<path d="M221 14 L227 9.5 V12 H232 A5 5 0 0 1 236.8 18 A4 4 0 0 0 232 15.5 H227 V18.5Z" fill="#cfd2d7"/>
<path d="M272 14 L266 9.5 V12 H261 A5 5 0 0 0 256.5 18 A4 4 0 0 1 261 15.5 H266 V18.5Z" fill="#6c727e"/>
<path d="M243 12.5 H249 L246 16Z M280 12.5 H286 L283 16Z" fill="#cfd2d7"/>
<path d="M293 11 H301.5 M293 13.5 H301.5 L297.2 18Z" stroke="#cfd2d7" stroke-width="1.2" fill="#cfd2d7"/>
<!-- right title icons -->
<g fill="#dcdee2"><rect x="1112" y="9" width="4" height="5"/><rect x="1121" y="9" width="4" height="5"/><rect x="1111" y="13" width="6" height="9"/><rect x="1120" y="13" width="6" height="9"/><rect x="1116" y="14" width="4" height="3"/></g>
<circle cx="1142" cy="12" r="4" fill="#dcdee2"/><path d="M1135 23 Q1135 17 1142 17 Q1149 17 1149 23Z" fill="#dcdee2"/>
<path d="M1239 12 H1245 L1242 15.5Z M1300 12 H1306 L1303 15.5Z M1349 12 H1355 L1352 15.5Z" fill="#cfd2d7"/>
<path d="M1257 9 H1260 L1263 18 H1270 L1272 12 H1261" stroke="#dcdee2" stroke-width="1.6" fill="none"/><circle cx="1263.5" cy="21" r="1.5" fill="#dcdee2"/><circle cx="1269.5" cy="21" r="1.5" fill="#dcdee2"/>
<path d="M1288 8 L1282 19 H1294Z" stroke="#c9d0e0" stroke-width="1.8" fill="none"/><circle cx="1288" cy="8" r="2" fill="#c9d0e0"/><circle cx="1282" cy="19" r="2" fill="#c9d0e0"/><circle cx="1294" cy="19" r="2" fill="#c9d0e0"/>
<circle cx="1334" cy="15" r="7.2" fill="#e8eaee"/>
<text x="1334" y="19.5" text-anchor="middle" font-family="Liberation Sans" font-weight="bold" font-size="12" fill="#2a5ab0">?</text>
<path d="M1365 34.5 H1373 L1371 37.5 H1367Z" fill="#dcdee2"/><rect x="1362" y="34" width="11" height="6" rx="1.5" fill="#dcdee2"/><path d="M1379 36 H1384 L1381.5 39Z" fill="#cfd2d7"/>
</svg>
<div class="lb" style="left:10.5px;top:91.6px;font-size:11.8px">Отрезок</div>
<div class="lb" style="left:61.5px;top:91.6px;font-size:12.1px">Полилиния</div>
<div class="lb" style="left:139.5px;top:91px">Круг</div>
<div class="lb" style="left:185.5px;top:91px">Дуга</div>
<div class="lb" style="left:413px;top:91.6px;font-size:11.4px">Текст</div>
<div class="lb" style="left:456.5px;top:91.6px;font-size:11.3px">Размер</div>
<div class="lb" style="left:544.5px;top:91.6px;font-size:11.4px">Свойства</div>
<div class="lb" style="left:557.5px;top:107.6px;font-size:11.6px">слоя</div>
<div class="lb" style="left:813.5px;top:91.6px;font-size:11.1px">Вставка</div>
<div class="lb" style="left:901px;top:91.6px;font-size:12.2px">Копирование</div>
<div class="lb" style="left:916.5px;top:107.6px;font-size:12px">свойств</div>
<div class="lb" style="left:1038px;top:58px;font-size:12.2px">ПоСлою</div>
<div class="lb" style="left:1069px;top:81px;font-size:12.2px">ПоСлою</div>
<div class="lb" style="left:1069px;top:105px;font-size:12.2px">ПоСл...</div>
<div class="lb" style="left:1144px;top:91.6px;font-size:12px">Группа</div>
<div class="lb" style="left:1227.5px;top:91.6px;font-size:11.9px">Измерить</div>
<div class="lb" style="left:1333.5px;top:91.6px;font-size:11.2px">Вставить</div>
<div class="lb" style="left:1431.5px;top:91.6px;font-size:11.5px">Базовый</div>
<div class="pl" style="left:98.5px">Рисование</div>
<div class="pl" style="left:281.5px;font-size:11.6px">Редактирование</div>
<div class="pl" style="left:431px;font-size:12.2px">Аннотации</div>
<div class="pl" style="left:652px;font-size:12px">Слои</div>
<div class="pl" style="left:832px;font-size:12px">Блок</div>
<div class="pl" style="left:979.5px;font-size:11.4px">Свойства</div>
<div class="pl" style="left:1148px;font-size:12px">Группы</div>
<div class="pl" style="left:1236px;font-size:12px">Утилиты</div>
<div class="pl" style="left:1330px;font-size:11.7px">Буфер обмена</div>
<div class="pl" style="left:1431.5px;font-size:12px">Вид</div>

<svg class="a" style="left:0;top:0" width="1494" height="1039" viewBox="0 0 1494 1039" font-family="Liberation Sans" fill="#000"><style>text{stroke:#000;stroke-width:.12px}</style>
<defs><pattern id="h" patternUnits="userSpaceOnUse" width="3.2" height="3.2" patternTransform="rotate(-45)"><rect width="3.2" height="3.2" fill="#ddd5ae"/><rect x="0" y="0" width="1.25" height="3.2" fill="#1a1a14"/></pattern></defs>
<rect x="6.5" y="352.5" width="339" height="480" fill="none" stroke="#e4dcf0" stroke-width="3"/>
<rect x="6.5" y="352.5" width="339" height="480" fill="none" stroke="#2c2298" stroke-width="1.1"/>
<rect x="38.60" y="360.60" width="299.60" height="464.00" fill="none" stroke="#000" stroke-width="2.2"/>
<rect x="18.80" y="686.60" width="19.80" height="138.00" fill="none" stroke="#000" stroke-width="1.8"/>
<path d="M27.4 686.6 L27.4 824.6" stroke="#000" stroke-width="1.6"/>
<path d="M18.8 727.6 L38.6 727.6" stroke="#000" stroke-width="1.8"/>
<path d="M18.8 783.8 L38.6 783.8" stroke="#000" stroke-width="1.8"/>
<rect x="21.80" y="695.00" width="4.40" height="25.50" fill="#000"/>
<rect x="21.80" y="742.00" width="4.40" height="29.00" fill="#000"/>
<rect x="21.80" y="791.00" width="4.40" height="25.50" fill="#000"/>
<rect x="260.00" y="826.00" width="23.00" height="5.00" fill="#000"/>
<path d="M38.6 735.4 L338.2 735.4" stroke="#000" stroke-width="2.2"/>
<path d="M55.6 735.4 L55.6 776.3" stroke="#000" stroke-width="1.8"/>
<path d="M71.7 735.4 L71.7 776.3" stroke="#000" stroke-width="1.8"/>
<path d="M88.1 735.4 L88.1 776.3" stroke="#000" stroke-width="1.8"/>
<path d="M104.3 735.4 L104.3 776.3" stroke="#000" stroke-width="1.8"/>
<path d="M128.4 735.4 L128.4 776.3" stroke="#000" stroke-width="1.8"/>
<path d="M144.6 735.4 L144.6 776.3" stroke="#000" stroke-width="1.8"/>
<path d="M38.6 744.2 L144.6 744.2" stroke="#000" stroke-width="1.3"/>
<path d="M38.6 752.0 L144.6 752.0" stroke="#000" stroke-width="1.3"/>
<path d="M38.6 760.3 L144.6 760.3" stroke="#000" stroke-width="1.3"/>
<rect x="39.50" y="768.20" width="105.10" height="6.00" fill="#000"/>
<rect x="40.20" y="769.80" width="1.60" height="4.60" fill="#ddd5ae"/>
<rect x="57.20" y="769.80" width="1.60" height="4.60" fill="#ddd5ae"/>
<rect x="73.30" y="769.80" width="1.60" height="4.60" fill="#ddd5ae"/>
<rect x="89.70" y="769.80" width="1.60" height="4.60" fill="#ddd5ae"/>
<rect x="105.90" y="769.80" width="1.60" height="4.60" fill="#ddd5ae"/>
<rect x="130.00" y="769.80" width="1.60" height="4.60" fill="#ddd5ae"/>
<path d="M38.6 776.3 L338.2 776.3" stroke="#000" stroke-width="2.2"/>
<path d="M71.7 776.3 L71.7 824.6" stroke="#000" stroke-width="1.8"/>
<path d="M104.3 776.3 L104.3 824.6" stroke="#000" stroke-width="1.8"/>
<path d="M128.4 776.3 L128.4 824.6" stroke="#000" stroke-width="1.8"/>
<path d="M144.6 776.3 L144.6 824.6" stroke="#000" stroke-width="1.8"/>
<path d="M38.6 784.2 L144.6 784.2" stroke="#000" stroke-width="1.3"/>
<path d="M38.6 792.2 L144.6 792.2" stroke="#000" stroke-width="1.3"/>
<path d="M38.6 800.3 L144.6 800.3" stroke="#000" stroke-width="1.3"/>
<path d="M38.6 808.4 L144.6 808.4" stroke="#000" stroke-width="1.3"/>
<path d="M38.6 816.6 L144.6 816.6" stroke="#000" stroke-width="1.3"/>
<path d="M144.6 751.4 L338.2 751.4" stroke="#000" stroke-width="2"/>
<path d="M257.3 776.3 L257.3 824.6" stroke="#000" stroke-width="2"/>
<path d="M281.3 776.3 L281.3 800.2" stroke="#000" stroke-width="1.8"/>
<path d="M306.0 776.3 L306.0 800.2" stroke="#000" stroke-width="1.8"/>
<path d="M257.3 783.6 L338.2 783.6" stroke="#000" stroke-width="1.3"/>
<path d="M144.6 800.2 L338.2 800.2" stroke="#000" stroke-width="2"/>
<text x="40.5" y="782.2" font-size="5.2" text-anchor="start" font-weight="bold" textLength="24" lengthAdjust="spacingAndGlyphs">Разработал</text>
<text x="40.5" y="790.3" font-size="5.2" text-anchor="start" font-weight="bold" textLength="20" lengthAdjust="spacingAndGlyphs">Проверил</text>
<text x="40.5" y="814.3" font-size="5.2" text-anchor="start" font-weight="bold" textLength="24" lengthAdjust="spacingAndGlyphs">Н.контроль</text>
<text x="40.5" y="822.4" font-size="5.2" text-anchor="start" font-weight="bold" textLength="20" lengthAdjust="spacingAndGlyphs">Утвердил</text>
<text x="269.6" y="782.2" font-size="5.4" text-anchor="middle" font-weight="bold">Стадия</text>
<text x="293.6" y="782.2" font-size="5.4" text-anchor="middle" font-weight="bold">Лист</text>
<text x="321.8" y="782.2" font-size="5.4" text-anchor="middle" font-weight="bold">Листов</text>
<text x="269.6" y="794.5" font-size="6.2" text-anchor="middle" >Р</text>
<text x="293.6" y="795.5" font-size="6.2" text-anchor="middle" >1.1</text>
<text x="321.8" y="795.5" font-size="6.2" text-anchor="middle" >4</text>
<text x="201.0" y="811.8" font-size="7" text-anchor="middle" >Чертежи охладителей</text>
<text x="201.0" y="818.0" font-size="7" text-anchor="middle" >для датчиков давления</text>
<g transform="translate(296.4,804)" fill="#000" stroke="#000"><circle cx="0" cy="3" r="2" stroke-width="1.6" fill="none"/><path d="M-0.5 1 V-0.5" stroke-width="1.5"/><path d="M-1.5 5 L-6 17.5 M1.5 5 L6 17.5" stroke-width="2.8"/><path d="M-5 12.5 Q0 9 5 12.5" stroke-width="2.2" fill="none"/><path d="M-6.3 17 L-6.8 19.5 M6.3 17 L6.8 19.5" stroke-width="2.4"/></g>
<text x="55.0" y="384.8" font-size="5.8" text-anchor="start" text-decoration="underline">Описание:</text>
<path d="M55.0 386.3 L82.0 386.3" stroke="#000" stroke-width="0.9"/>
<text x="55.0" y="396.2" font-size="5.8" textLength="138.2" lengthAdjust="spacingAndGlyphs">Предназначены для охлаждения измеряемой среды</text>
<rect x="193.70" y="389.30" width="2.90" height="6.50" fill="#000"/>
<text x="197.2" y="396.2" font-size="5.8" textLength="112.8" lengthAdjust="spacingAndGlyphs">поступающей в рабочие полости приборов</text>
<text x="55.0" y="406.2" font-size="5.8" textLength="68.0" lengthAdjust="spacingAndGlyphs">для измерения давления.</text>
<text x="55.0" y="416.2" font-size="5.8" textLength="80.0" lengthAdjust="spacingAndGlyphs">Присоединительные размеры:</text>
<rect x="55.00" y="420.20" width="3.60" height="6.20" fill="#000"/>
<text x="59.0" y="426.2" font-size="5.8" textLength="41.0" lengthAdjust="spacingAndGlyphs">на входе среды</text>
<rect x="100.20" y="420.20" width="3.00" height="6.20" fill="#000"/>
<text x="103.6" y="426.2" font-size="5.8" textLength="68.4" lengthAdjust="spacingAndGlyphs">наружная резьба М20х1,5;</text>
<rect x="55.00" y="429.90" width="3.60" height="6.50" fill="#000"/>
<text x="59.0" y="436.2" font-size="5.8" textLength="44.5" lengthAdjust="spacingAndGlyphs">на выходе среды</text>
<rect x="103.70" y="429.90" width="3.00" height="6.50" fill="#000"/>
<text x="107.0" y="436.2" font-size="5.8" textLength="73.5" lengthAdjust="spacingAndGlyphs">внутренняя резьба М20х1,5.</text>
<text x="55.0" y="446.7" font-size="5.8" textLength="136.0" lengthAdjust="spacingAndGlyphs">Материал корпуса нержавеющая сталь 12Х18Н10Т.</text>
<text x="55.0" y="456.7" font-size="5.8" textLength="195.0" lengthAdjust="spacingAndGlyphs">В комплекте представлены чертежи следующих охладителей для КИПиА:</text>
<circle cx="56.3" cy="464.8" r="1" fill="#000"/>
<text x="66.8" y="466.8" font-size="5.8" textLength="114" lengthAdjust="spacingAndGlyphs">Охладитель ОС100-ОХ28 - диаметр 28 мм.</text>
<circle cx="56.3" cy="474.8" r="1" fill="#000"/>
<text x="66.8" y="476.8" font-size="5.8" textLength="117" lengthAdjust="spacingAndGlyphs">Охладитель ОС100-ОХ50 - диаметр - 50 мм.</text>
<circle cx="56.3" cy="484.8" r="1" fill="#000"/>
<text x="66.8" y="486.8" font-size="5.8" textLength="116" lengthAdjust="spacingAndGlyphs">Охладитель ОС100/ОК100 - диаметр - 3 мм.</text>
<rect x="386.5" y="352.5" width="339" height="480" fill="none" stroke="#e4dcf0" stroke-width="3"/>
<rect x="386.5" y="352.5" width="339" height="480" fill="none" stroke="#2c2298" stroke-width="1.1"/>
<rect x="418.60" y="360.60" width="299.60" height="464.00" fill="none" stroke="#000" stroke-width="2.2"/>
<rect x="398.80" y="686.60" width="19.80" height="138.00" fill="none" stroke="#000" stroke-width="1.8"/>
<path d="M407.4 686.6 L407.4 824.6" stroke="#000" stroke-width="1.6"/>
<path d="M398.8 727.6 L418.6 727.6" stroke="#000" stroke-width="1.8"/>
<path d="M398.8 783.8 L418.6 783.8" stroke="#000" stroke-width="1.8"/>
<rect x="401.80" y="695.00" width="4.40" height="25.50" fill="#000"/>
<rect x="401.80" y="742.00" width="4.40" height="29.00" fill="#000"/>
<rect x="401.80" y="791.00" width="4.40" height="25.50" fill="#000"/>
<rect x="640.00" y="826.00" width="23.00" height="5.00" fill="#000"/>
<path d="M418.6 800.1 L718.2 800.1" stroke="#000" stroke-width="2.2"/>
<path d="M435.6 800.1 L435.6 824.6" stroke="#000" stroke-width="1.8"/>
<path d="M451.7 800.1 L451.7 824.6" stroke="#000" stroke-width="1.8"/>
<path d="M468.1 800.1 L468.1 824.6" stroke="#000" stroke-width="1.8"/>
<path d="M484.3 800.1 L484.3 824.6" stroke="#000" stroke-width="1.8"/>
<path d="M508.4 800.1 L508.4 824.6" stroke="#000" stroke-width="1.8"/>
<path d="M524.6 800.1 L524.6 824.6" stroke="#000" stroke-width="1.8"/>
<path d="M418.6 808.4 L524.6 808.4" stroke="#000" stroke-width="1.3"/>
<rect x="419.50" y="815.80" width="105.10" height="6.00" fill="#000"/>
<rect x="420.20" y="817.40" width="1.60" height="4.60" fill="#ddd5ae"/>
<rect x="437.20" y="817.40" width="1.60" height="4.60" fill="#ddd5ae"/>
<rect x="453.30" y="817.40" width="1.60" height="4.60" fill="#ddd5ae"/>
<rect x="469.70" y="817.40" width="1.60" height="4.60" fill="#ddd5ae"/>
<rect x="485.90" y="817.40" width="1.60" height="4.60" fill="#ddd5ae"/>
<rect x="510.00" y="817.40" width="1.60" height="4.60" fill="#ddd5ae"/>
<path d="M702.0 800.1 L702.0 824.6" stroke="#000" stroke-width="2"/>
<path d="M702.0 811.4 L718.2 811.4" stroke="#000" stroke-width="1.8"/>
<text x="710.5" y="808.2" font-size="5.2" text-anchor="middle" font-weight="bold">Лист</text>
<text x="710.0" y="819.8" font-size="6" text-anchor="middle" >1.2</text>
<text x="568.5" y="397.0" font-size="6.9" text-anchor="middle" >Охладитель ОС100-ОХ28</text>
<text x="569.0" y="405.0" font-size="6.9" text-anchor="middle" >М1:1</text>
<text x="435.0" y="773.2" font-size="5.6" text-anchor="start" >Примечание:</text>
<path d="M435.0 774.6 L465.5 774.6" stroke="#000" stroke-width="0.9"/>
<text x="435" y="783.2" font-size="5.8" textLength="64" lengthAdjust="spacingAndGlyphs">Параметры охлаждения</text>
<rect x="499.30" y="777.60" width="2.40" height="6.40" fill="#000"/>
<text x="502" y="783.2" font-size="5.8" textLength="33" lengthAdjust="spacingAndGlyphs">Твх = 280°С</text>
<rect x="535.40" y="777.60" width="2.40" height="6.40" fill="#000"/>
<text x="538.1" y="783.2" font-size="5.8" textLength="34.7" lengthAdjust="spacingAndGlyphs">Твых = 50°С.</text>
<rect x="766.5" y="352.5" width="339" height="480" fill="none" stroke="#e4dcf0" stroke-width="3"/>
<rect x="766.5" y="352.5" width="339" height="480" fill="none" stroke="#2c2298" stroke-width="1.1"/>
<rect x="798.60" y="360.60" width="299.60" height="464.00" fill="none" stroke="#000" stroke-width="2.2"/>
<rect x="778.80" y="686.60" width="19.80" height="138.00" fill="none" stroke="#000" stroke-width="1.8"/>
<path d="M787.4 686.6 L787.4 824.6" stroke="#000" stroke-width="1.6"/>
<path d="M778.8 727.6 L798.6 727.6" stroke="#000" stroke-width="1.8"/>
<path d="M778.8 783.8 L798.6 783.8" stroke="#000" stroke-width="1.8"/>
<rect x="781.80" y="695.00" width="4.40" height="25.50" fill="#000"/>
<rect x="781.80" y="742.00" width="4.40" height="29.00" fill="#000"/>
<rect x="781.80" y="791.00" width="4.40" height="25.50" fill="#000"/>
<rect x="1020.00" y="826.00" width="23.00" height="5.00" fill="#000"/>
<path d="M798.6 800.1 L1098.2 800.1" stroke="#000" stroke-width="2.2"/>
<path d="M815.6 800.1 L815.6 824.6" stroke="#000" stroke-width="1.8"/>
<path d="M831.7 800.1 L831.7 824.6" stroke="#000" stroke-width="1.8"/>
<path d="M848.1 800.1 L848.1 824.6" stroke="#000" stroke-width="1.8"/>
<path d="M864.3 800.1 L864.3 824.6" stroke="#000" stroke-width="1.8"/>
<path d="M888.4 800.1 L888.4 824.6" stroke="#000" stroke-width="1.8"/>
<path d="M904.6 800.1 L904.6 824.6" stroke="#000" stroke-width="1.8"/>
<path d="M798.6 808.4 L904.6 808.4" stroke="#000" stroke-width="1.3"/>
<rect x="799.50" y="815.80" width="105.10" height="6.00" fill="#000"/>
<rect x="800.20" y="817.40" width="1.60" height="4.60" fill="#ddd5ae"/>
<rect x="817.20" y="817.40" width="1.60" height="4.60" fill="#ddd5ae"/>
<rect x="833.30" y="817.40" width="1.60" height="4.60" fill="#ddd5ae"/>
<rect x="849.70" y="817.40" width="1.60" height="4.60" fill="#ddd5ae"/>
<rect x="865.90" y="817.40" width="1.60" height="4.60" fill="#ddd5ae"/>
<rect x="890.00" y="817.40" width="1.60" height="4.60" fill="#ddd5ae"/>
<path d="M1082.0 800.1 L1082.0 824.6" stroke="#000" stroke-width="2"/>
<path d="M1082.0 811.4 L1098.2 811.4" stroke="#000" stroke-width="1.8"/>
<text x="1090.5" y="808.2" font-size="5.2" text-anchor="middle" font-weight="bold">Лист</text>
<text x="1090.0" y="819.8" font-size="6" text-anchor="middle" >1.3</text>
<text x="948.5" y="397.0" font-size="6.9" text-anchor="middle" >Охладитель ОС100-ОХ50</text>
<text x="949.0" y="405.0" font-size="6.9" text-anchor="middle" >М1:1</text>
<text x="815.0" y="773.2" font-size="5.6" text-anchor="start" >Примечание:</text>
<path d="M815.0 774.6 L845.5 774.6" stroke="#000" stroke-width="0.9"/>
<text x="815" y="783.2" font-size="5.8" textLength="64" lengthAdjust="spacingAndGlyphs">Параметры охлаждения</text>
<rect x="879.30" y="777.60" width="2.40" height="6.40" fill="#000"/>
<text x="882" y="783.2" font-size="5.8" textLength="33" lengthAdjust="spacingAndGlyphs">Твх = 350°С</text>
<rect x="915.40" y="777.60" width="2.40" height="6.40" fill="#000"/>
<text x="918.1" y="783.2" font-size="5.8" textLength="34.7" lengthAdjust="spacingAndGlyphs">Твых = 50°С.</text>
<rect x="1146.5" y="352.5" width="339" height="480" fill="none" stroke="#e4dcf0" stroke-width="3"/>
<rect x="1146.5" y="352.5" width="339" height="480" fill="none" stroke="#2c2298" stroke-width="1.1"/>
<rect x="1178.60" y="360.60" width="299.60" height="464.00" fill="none" stroke="#000" stroke-width="2.2"/>
<rect x="1158.80" y="686.60" width="19.80" height="138.00" fill="none" stroke="#000" stroke-width="1.8"/>
<path d="M1167.4 686.6 L1167.4 824.6" stroke="#000" stroke-width="1.6"/>
<path d="M1158.8 727.6 L1178.6 727.6" stroke="#000" stroke-width="1.8"/>
<path d="M1158.8 783.8 L1178.6 783.8" stroke="#000" stroke-width="1.8"/>
<rect x="1161.80" y="695.00" width="4.40" height="25.50" fill="#000"/>
<rect x="1161.80" y="742.00" width="4.40" height="29.00" fill="#000"/>
<rect x="1161.80" y="791.00" width="4.40" height="25.50" fill="#000"/>
<rect x="1400.00" y="826.00" width="23.00" height="5.00" fill="#000"/>
<path d="M1178.6 800.1 L1478.2 800.1" stroke="#000" stroke-width="2.2"/>
<path d="M1195.6 800.1 L1195.6 824.6" stroke="#000" stroke-width="1.8"/>
<path d="M1211.7 800.1 L1211.7 824.6" stroke="#000" stroke-width="1.8"/>
<path d="M1228.1 800.1 L1228.1 824.6" stroke="#000" stroke-width="1.8"/>
<path d="M1244.3 800.1 L1244.3 824.6" stroke="#000" stroke-width="1.8"/>
<path d="M1268.4 800.1 L1268.4 824.6" stroke="#000" stroke-width="1.8"/>
<path d="M1284.6 800.1 L1284.6 824.6" stroke="#000" stroke-width="1.8"/>
<path d="M1178.6 808.4 L1284.6 808.4" stroke="#000" stroke-width="1.3"/>
<rect x="1179.50" y="815.80" width="105.10" height="6.00" fill="#000"/>
<rect x="1180.20" y="817.40" width="1.60" height="4.60" fill="#ddd5ae"/>
<rect x="1197.20" y="817.40" width="1.60" height="4.60" fill="#ddd5ae"/>
<rect x="1213.30" y="817.40" width="1.60" height="4.60" fill="#ddd5ae"/>
<rect x="1229.70" y="817.40" width="1.60" height="4.60" fill="#ddd5ae"/>
<rect x="1245.90" y="817.40" width="1.60" height="4.60" fill="#ddd5ae"/>
<rect x="1270.00" y="817.40" width="1.60" height="4.60" fill="#ddd5ae"/>
<path d="M1462.0 800.1 L1462.0 824.6" stroke="#000" stroke-width="2"/>
<path d="M1462.0 811.4 L1478.2 811.4" stroke="#000" stroke-width="1.8"/>
<text x="1470.5" y="808.2" font-size="5.2" text-anchor="middle" font-weight="bold">Лист</text>
<text x="1470.0" y="819.8" font-size="6" text-anchor="middle" >1.4</text>
<text x="1328.5" y="397.0" font-size="6.9" text-anchor="middle" >Охладитель ОС100/ОК100</text>
<text x="1329.0" y="405.0" font-size="6.9" text-anchor="middle" >М1:1</text>
<text x="1195.0" y="773.2" font-size="5.6" text-anchor="start" >Примечание:</text>
<path d="M1195.0 774.6 L1225.5 774.6" stroke="#000" stroke-width="0.9"/>
<text x="1195" y="783.2" font-size="5.8" textLength="64" lengthAdjust="spacingAndGlyphs">Параметры охлаждения</text>
<rect x="1259.30" y="777.60" width="2.40" height="6.40" fill="#000"/>
<text x="1262" y="783.2" font-size="5.8" textLength="33" lengthAdjust="spacingAndGlyphs">Твх = 480°С</text>
<rect x="1295.40" y="777.60" width="2.40" height="6.40" fill="#000"/>
<text x="1298.1" y="783.2" font-size="5.8" textLength="34.7" lengthAdjust="spacingAndGlyphs">Твых = 50°С.</text>
<path d="M551.6 445.0 L585.0 445.0" stroke="#000" stroke-width="0.9"/>
<path d="M550.2 447.0 L554.2 443.0" stroke="#000" stroke-width="1.2"/>
<path d="M582.5 447.0 L586.5 443.0" stroke="#000" stroke-width="1.2"/>
<path d="M552.2 443.0 L552.2 455.0" stroke="#000" stroke-width="0.9"/>
<path d="M584.5 443.0 L584.5 455.0" stroke="#000" stroke-width="0.9"/>
<text x="568.7" y="443.5" font-size="5.3" text-anchor="middle" >М20х1,5</text>
<path d="M519.8 456.8 L544.6 456.8" stroke="#000" stroke-width="0.9"/>
<path d="M519.8 495.8 L544.6 495.8" stroke="#000" stroke-width="0.9"/>
<path d="M521.5 455.0 L521.5 577.8" stroke="#000" stroke-width="0.9"/>
<path d="M519.5 458.8 L523.5 454.8" stroke="#000" stroke-width="1.2"/>
<path d="M519.5 497.8 L523.5 493.8" stroke="#000" stroke-width="1.2"/>
<path d="M519.5 579.8 L523.5 575.8" stroke="#000" stroke-width="1.2"/>
<path d="M531.0 456.8 L546.0 456.8" stroke="#000" stroke-width="0.9"/>
<path d="M533.0 456.0 L533.0 486.6" stroke="#000" stroke-width="0.9"/>
<path d="M531.0 486.6 L546.0 486.6" stroke="#000" stroke-width="0.9"/>
<path d="M531.0 458.8 L535.0 454.8" stroke="#000" stroke-width="1.2"/>
<path d="M531.0 488.6 L535.0 484.6" stroke="#000" stroke-width="1.2"/>
<text x="518.6" y="475.6" font-size="5.8" text-anchor="middle" transform="rotate(-90 518.6 475.6)">28</text>
<text x="530.0" y="471.6" font-size="5.8" text-anchor="middle" transform="rotate(-90 530.0 471.6)">19</text>
<text x="518.6" y="536.3" font-size="5.8" text-anchor="middle" transform="rotate(-90 518.6 536.3)">61</text>
<path d="M519.8 577.8 L545.0 577.8" stroke="#000" stroke-width="0.9"/>
<path d="M519.8 593.8 L545.0 593.8" stroke="#000" stroke-width="0.9"/>
<path d="M521.2 577.8 L521.2 593.8" stroke="#000" stroke-width="0.9"/>
<path d="M519.2 595.8 L523.2 591.8" stroke="#000" stroke-width="1.2"/>
<text x="518.6" y="585.8" font-size="5.8" text-anchor="middle" transform="rotate(-90 518.6 585.8)">10</text>
<path d="M519.8 626.2 L563.0 626.2" stroke="#000" stroke-width="0.9"/>
<path d="M519.8 631.0 L563.0 631.0" stroke="#000" stroke-width="0.9"/>
<path d="M519.2 628.2 L523.2 624.2" stroke="#000" stroke-width="1.2"/>
<path d="M519.2 633.0 L523.2 629.0" stroke="#000" stroke-width="1.2"/>
<text x="519.8" y="628.7" font-size="6.2" text-anchor="middle" transform="rotate(-90 519.8 628.7)">3</text>
<rect x="544.60" y="454.80" width="48.30" height="41.60" fill="#000"/>
<rect x="546.7" y="457.8" width="43.9" height="36.3" fill="url(#h)"/>
<rect x="554.50" y="457.80" width="28.30" height="30.00" fill="#ddd5ae"/>
<path d="M553.3 458.0 L553.3 487.8" stroke="#000" stroke-width="0.9"/>
<path d="M584.0 458.0 L584.0 487.8" stroke="#000" stroke-width="0.9"/>
<path d="M556.0 476.8 L581.0 476.8" stroke="#000" stroke-width="0.9"/>
<path d="M554.5 478.8 L558.5 474.8" stroke="#000" stroke-width="1.2"/>
<path d="M578.5 478.8 L582.5 474.8" stroke="#000" stroke-width="1.2"/>
<path d="M556.5 474.0 L556.5 488.0" stroke="#000" stroke-width="0.9"/>
<path d="M580.5 474.0 L580.5 488.0" stroke="#000" stroke-width="0.9"/>
<text x="568.7" y="475.3" font-size="5.3" text-anchor="middle" >14</text>
<rect x="545.50" y="496.40" width="46.50" height="2.20" fill="#ddd5ae"/>
<rect x="556.20" y="496.40" width="2.60" height="2.20" fill="#000"/>
<rect x="578.20" y="496.40" width="2.80" height="2.20" fill="#000"/>
<rect x="544.5" y="498.60" width="48.3" height="8.3" rx="1.6" fill="#000"/>
<rect x="547.40" y="502.15" width="42.50" height="1.20" fill="#ddd5ae"/>
<rect x="556.20" y="506.90" width="2.60" height="1.38" fill="#000"/>
<rect x="578.20" y="506.90" width="2.80" height="1.38" fill="#000"/>
<rect x="544.5" y="508.28" width="48.3" height="8.3" rx="1.6" fill="#000"/>
<rect x="547.40" y="511.83" width="42.50" height="1.20" fill="#ddd5ae"/>
<rect x="556.20" y="516.58" width="2.60" height="1.38" fill="#000"/>
<rect x="578.20" y="516.58" width="2.80" height="1.38" fill="#000"/>
<rect x="544.5" y="517.96" width="48.3" height="8.3" rx="1.6" fill="#000"/>
<rect x="547.40" y="521.51" width="42.50" height="1.20" fill="#ddd5ae"/>
<rect x="556.20" y="526.26" width="2.60" height="1.38" fill="#000"/>
<rect x="578.20" y="526.26" width="2.80" height="1.38" fill="#000"/>
<rect x="544.5" y="527.64" width="48.3" height="8.3" rx="1.6" fill="#000"/>
<rect x="547.40" y="531.19" width="42.50" height="1.20" fill="#ddd5ae"/>
<rect x="556.20" y="535.94" width="2.60" height="1.38" fill="#000"/>
<rect x="578.20" y="535.94" width="2.80" height="1.38" fill="#000"/>
<rect x="544.5" y="537.32" width="48.3" height="8.3" rx="1.6" fill="#000"/>
<rect x="547.40" y="540.87" width="42.50" height="1.20" fill="#ddd5ae"/>
<rect x="556.20" y="545.62" width="2.60" height="1.38" fill="#000"/>
<rect x="578.20" y="545.62" width="2.80" height="1.38" fill="#000"/>
<rect x="544.5" y="547.00" width="48.3" height="8.3" rx="1.6" fill="#000"/>
<rect x="547.40" y="550.55" width="42.50" height="1.20" fill="#ddd5ae"/>
<rect x="556.20" y="555.30" width="2.60" height="1.38" fill="#000"/>
<rect x="578.20" y="555.30" width="2.80" height="1.38" fill="#000"/>
<rect x="544.5" y="556.68" width="48.3" height="8.3" rx="1.6" fill="#000"/>
<rect x="547.40" y="560.23" width="42.50" height="1.20" fill="#ddd5ae"/>
<rect x="556.20" y="564.98" width="2.60" height="1.38" fill="#000"/>
<rect x="578.20" y="564.98" width="2.80" height="1.38" fill="#000"/>
<rect x="544.5" y="566.36" width="48.3" height="8.3" rx="1.6" fill="#000"/>
<rect x="547.40" y="569.91" width="42.50" height="1.20" fill="#ddd5ae"/>
<rect x="556.20" y="574.60" width="2.60" height="3.40" fill="#000"/>
<rect x="578.20" y="574.60" width="2.80" height="3.40" fill="#000"/>
<path d="M592.8 495.8 L610.8 495.8" stroke="#000" stroke-width="0.9"/>
<path d="M592.8 501.6 L610.8 501.6" stroke="#000" stroke-width="0.9"/>
<path d="M606.3 497.8 L610.3 493.8" stroke="#000" stroke-width="1.2"/>
<path d="M606.3 503.6 L610.3 499.6" stroke="#000" stroke-width="1.2"/>
<text x="606.8" y="498.8" font-size="6" text-anchor="middle" transform="rotate(-90 606.8 498.8)">3</text>
<path d="M592.8 518.9 L610.8 518.9" stroke="#000" stroke-width="0.9"/>
<path d="M592.8 525.9 L610.8 525.9" stroke="#000" stroke-width="0.9"/>
<path d="M606.3 520.9 L610.3 516.9" stroke="#000" stroke-width="1.2"/>
<path d="M606.3 527.9 L610.3 523.9" stroke="#000" stroke-width="1.2"/>
<text x="606.8" y="522.4" font-size="6" text-anchor="middle" transform="rotate(-90 606.8 522.4)">2</text>
<path d="M546.3 578 H591.4 V590 L589.0 593.5 H548.6 L546.3 590Z" fill="none" stroke="#000" stroke-width="2.9"/>
<path d="M557.4 577.0 L557.4 594.0" stroke="#000" stroke-width="2.6"/>
<path d="M579.8 577.0 L579.8 594.0" stroke="#000" stroke-width="2.6"/>
<path d="M557.4 592.5 Q568.7 588.5 579.8 592.5" fill="none" stroke="#000" stroke-width="2"/>
<path d="M546.3 590.5 Q551.5 590 557.4 592.5 M579.8 592.5 Q586.0 590 591.4 590.5" fill="none" stroke="#000" stroke-width="2"/>
<rect x="552.70" y="596.60" width="31.90" height="24.60" fill="none" stroke="#000" stroke-width="2.9"/>
<rect x="553.00" y="621.80" width="31.30" height="5.50" fill="#000"/>
<rect x="555.00" y="623.00" width="27.00" height="1.20" fill="#ddd5ae"/>
<rect x="562.30" y="627.80" width="12.60" height="4.40" fill="#000"/>
<rect x="564.50" y="629.20" width="8.20" height="1.10" fill="#ddd5ae"/>
<path d="M564.0 632.0 L564.0 647.0" stroke="#000" stroke-width="0.9"/>
<path d="M573.3 632.0 L573.3 647.0" stroke="#000" stroke-width="0.9"/>
<path d="M561.0 648.5 L576.0 648.5" stroke="#000" stroke-width="0.9"/>
<path d="M561.5 650.5 L565.5 646.5" stroke="#000" stroke-width="1.2"/>
<path d="M572.0 650.5 L576.0 646.5" stroke="#000" stroke-width="1.2"/>
<text x="568.7" y="646.8" font-size="5.3" text-anchor="middle" >ф6</text>
<path d="M554.0 627.0 L554.0 661.5" stroke="#000" stroke-width="0.9"/>
<path d="M583.3 627.0 L583.3 661.5" stroke="#000" stroke-width="0.9"/>
<path d="M553.3 660.8 L583.3 660.8" stroke="#000" stroke-width="0.9"/>
<path d="M552.0 662.8 L556.0 658.8" stroke="#000" stroke-width="1.2"/>
<path d="M581.3 662.8 L585.3 658.8" stroke="#000" stroke-width="1.2"/>
<text x="568.7" y="658.0" font-size="5.5" text-anchor="middle" >ф17,8</text>
<path d="M552.6 622.0 L552.6 670.5" stroke="#000" stroke-width="0.9"/>
<path d="M584.6 622.0 L584.6 670.5" stroke="#000" stroke-width="0.9"/>
<path d="M551.9 669.9 L585.3 669.9" stroke="#000" stroke-width="0.9"/>
<path d="M550.6 671.9 L554.6 667.9" stroke="#000" stroke-width="1.2"/>
<path d="M582.6 671.9 L586.6 667.9" stroke="#000" stroke-width="1.2"/>
<text x="568.7" y="667.6" font-size="5.5" text-anchor="middle" >20х1,5</text>
<path d="M545.6 594.0 L545.6 680.0" stroke="#000" stroke-width="0.9"/>
<path d="M591.0 594.0 L591.0 680.0" stroke="#000" stroke-width="0.9"/>
<path d="M544.9 679.6 L592.3 679.6" stroke="#000" stroke-width="0.9"/>
<path d="M543.6 681.6 L547.6 677.6" stroke="#000" stroke-width="1.2"/>
<path d="M589.6 681.6 L593.6 677.6" stroke="#000" stroke-width="1.2"/>
<text x="568.7" y="677.5" font-size="5.5" text-anchor="middle" >28</text>
<path d="M586.0 623.1 L609.0 623.1" stroke="#000" stroke-width="0.9"/>
<path d="M586.0 627.3 L609.0 627.3" stroke="#000" stroke-width="0.9"/>
<path d="M605.0 625.1 L609.0 621.1" stroke="#000" stroke-width="1.2"/>
<path d="M605.0 629.3 L609.0 625.3" stroke="#000" stroke-width="1.2"/>
<text x="607.5" y="631.5" font-size="6" text-anchor="middle" transform="rotate(-90 607.5 631.5)">2</text>
<path d="M568.7 447.9 V646.5" stroke="#2a22c8" stroke-width="1.1" stroke-dasharray="9 2 1.5 2"/>
<path d="M931.6 445.0 L965.0 445.0" stroke="#000" stroke-width="0.9"/>
<path d="M930.2 447.0 L934.2 443.0" stroke="#000" stroke-width="1.2"/>
<path d="M962.5 447.0 L966.5 443.0" stroke="#000" stroke-width="1.2"/>
<path d="M932.2 443.0 L932.2 455.0" stroke="#000" stroke-width="0.9"/>
<path d="M964.5 443.0 L964.5 455.0" stroke="#000" stroke-width="0.9"/>
<text x="948.7" y="443.5" font-size="5.3" text-anchor="middle" >20</text>
<path d="M891.8 456.8 L924.6 456.8" stroke="#000" stroke-width="0.9"/>
<path d="M891.8 495.8 L924.6 495.8" stroke="#000" stroke-width="0.9"/>
<path d="M893.5 455.0 L893.5 577.8" stroke="#000" stroke-width="0.9"/>
<path d="M891.5 458.8 L895.5 454.8" stroke="#000" stroke-width="1.2"/>
<path d="M891.5 497.8 L895.5 493.8" stroke="#000" stroke-width="1.2"/>
<path d="M891.5 579.8 L895.5 575.8" stroke="#000" stroke-width="1.2"/>
<path d="M907.1 456.8 L926.0 456.8" stroke="#000" stroke-width="0.9"/>
<path d="M909.1 456.0 L909.1 486.6" stroke="#000" stroke-width="0.9"/>
<path d="M907.1 486.6 L926.0 486.6" stroke="#000" stroke-width="0.9"/>
<path d="M907.1 458.8 L911.1 454.8" stroke="#000" stroke-width="1.2"/>
<path d="M907.1 488.6 L911.1 484.6" stroke="#000" stroke-width="1.2"/>
<text x="890.6" y="475.6" font-size="5.8" text-anchor="middle" transform="rotate(-90 890.6 475.6)">28</text>
<text x="906.1" y="471.6" font-size="5.8" text-anchor="middle" transform="rotate(-90 906.1 471.6)">19</text>
<text x="890.6" y="536.3" font-size="5.8" text-anchor="middle" transform="rotate(-90 890.6 536.3)">61</text>
<path d="M891.8 577.8 L925.0 577.8" stroke="#000" stroke-width="0.9"/>
<path d="M891.8 593.8 L925.0 593.8" stroke="#000" stroke-width="0.9"/>
<path d="M893.2 577.8 L893.2 593.8" stroke="#000" stroke-width="0.9"/>
<path d="M891.2 595.8 L895.2 591.8" stroke="#000" stroke-width="1.2"/>
<text x="890.6" y="585.8" font-size="5.8" text-anchor="middle" transform="rotate(-90 890.6 585.8)">10</text>
<path d="M891.8 626.2 L943.0 626.2" stroke="#000" stroke-width="0.9"/>
<path d="M891.8 631.0 L943.0 631.0" stroke="#000" stroke-width="0.9"/>
<path d="M891.2 628.2 L895.2 624.2" stroke="#000" stroke-width="1.2"/>
<path d="M891.2 633.0 L895.2 629.0" stroke="#000" stroke-width="1.2"/>
<text x="891.8" y="628.7" font-size="6.2" text-anchor="middle" transform="rotate(-90 891.8 628.7)">3</text>
<rect x="924.60" y="454.80" width="48.30" height="41.60" fill="#000"/>
<rect x="926.7" y="457.8" width="43.9" height="36.3" fill="url(#h)"/>
<rect x="934.50" y="457.80" width="28.30" height="30.00" fill="#ddd5ae"/>
<path d="M933.3 458.0 L933.3 487.8" stroke="#000" stroke-width="0.9"/>
<path d="M964.0 458.0 L964.0 487.8" stroke="#000" stroke-width="0.9"/>
<path d="M936.0 476.8 L961.0 476.8" stroke="#000" stroke-width="0.9"/>
<path d="M934.5 478.8 L938.5 474.8" stroke="#000" stroke-width="1.2"/>
<path d="M958.5 478.8 L962.5 474.8" stroke="#000" stroke-width="1.2"/>
<path d="M936.5 474.0 L936.5 488.0" stroke="#000" stroke-width="0.9"/>
<path d="M960.5 474.0 L960.5 488.0" stroke="#000" stroke-width="0.9"/>
<text x="948.7" y="475.3" font-size="5.3" text-anchor="middle" >14</text>
<rect x="925.50" y="496.40" width="46.50" height="2.20" fill="#ddd5ae"/>
<rect x="936.20" y="496.40" width="2.60" height="2.20" fill="#000"/>
<rect x="958.20" y="496.40" width="2.80" height="2.20" fill="#000"/>
<rect x="907.1" y="498.60" width="83.7" height="8.3" rx="1.6" fill="#000"/>
<rect x="910.00" y="502.15" width="77.90" height="1.20" fill="#ddd5ae"/>
<rect x="936.20" y="506.90" width="2.60" height="1.38" fill="#000"/>
<rect x="958.20" y="506.90" width="2.80" height="1.38" fill="#000"/>
<rect x="907.1" y="508.28" width="83.7" height="8.3" rx="1.6" fill="#000"/>
<rect x="910.00" y="511.83" width="77.90" height="1.20" fill="#ddd5ae"/>
<rect x="936.20" y="516.58" width="2.60" height="1.38" fill="#000"/>
<rect x="958.20" y="516.58" width="2.80" height="1.38" fill="#000"/>
<rect x="907.1" y="517.96" width="83.7" height="8.3" rx="1.6" fill="#000"/>
<rect x="910.00" y="521.51" width="77.90" height="1.20" fill="#ddd5ae"/>
<rect x="936.20" y="526.26" width="2.60" height="1.38" fill="#000"/>
<rect x="958.20" y="526.26" width="2.80" height="1.38" fill="#000"/>
<rect x="907.1" y="527.64" width="83.7" height="8.3" rx="1.6" fill="#000"/>
<rect x="910.00" y="531.19" width="77.90" height="1.20" fill="#ddd5ae"/>
<rect x="936.20" y="535.94" width="2.60" height="1.38" fill="#000"/>
<rect x="958.20" y="535.94" width="2.80" height="1.38" fill="#000"/>
<rect x="907.1" y="537.32" width="83.7" height="8.3" rx="1.6" fill="#000"/>
<rect x="910.00" y="540.87" width="77.90" height="1.20" fill="#ddd5ae"/>
<rect x="936.20" y="545.62" width="2.60" height="1.38" fill="#000"/>
<rect x="958.20" y="545.62" width="2.80" height="1.38" fill="#000"/>
<rect x="907.1" y="547.00" width="83.7" height="8.3" rx="1.6" fill="#000"/>
<rect x="910.00" y="550.55" width="77.90" height="1.20" fill="#ddd5ae"/>
<rect x="936.20" y="555.30" width="2.60" height="1.38" fill="#000"/>
<rect x="958.20" y="555.30" width="2.80" height="1.38" fill="#000"/>
<rect x="907.1" y="556.68" width="83.7" height="8.3" rx="1.6" fill="#000"/>
<rect x="910.00" y="560.23" width="77.90" height="1.20" fill="#ddd5ae"/>
<rect x="936.20" y="564.98" width="2.60" height="1.38" fill="#000"/>
<rect x="958.20" y="564.98" width="2.80" height="1.38" fill="#000"/>
<rect x="907.1" y="566.36" width="83.7" height="8.3" rx="1.6" fill="#000"/>
<rect x="910.00" y="569.91" width="77.90" height="1.20" fill="#ddd5ae"/>
<rect x="936.20" y="574.60" width="2.60" height="3.40" fill="#000"/>
<rect x="958.20" y="574.60" width="2.80" height="3.40" fill="#000"/>
<path d="M990.8 495.8 L1008.8 495.8" stroke="#000" stroke-width="0.9"/>
<path d="M990.8 501.6 L1008.8 501.6" stroke="#000" stroke-width="0.9"/>
<path d="M1004.3 497.8 L1008.3 493.8" stroke="#000" stroke-width="1.2"/>
<path d="M1004.3 503.6 L1008.3 499.6" stroke="#000" stroke-width="1.2"/>
<text x="1004.8" y="498.8" font-size="6" text-anchor="middle" transform="rotate(-90 1004.8 498.8)">3</text>
<path d="M990.8 518.9 L1008.8 518.9" stroke="#000" stroke-width="0.9"/>
<path d="M990.8 525.9 L1008.8 525.9" stroke="#000" stroke-width="0.9"/>
<path d="M1004.3 520.9 L1008.3 516.9" stroke="#000" stroke-width="1.2"/>
<path d="M1004.3 527.9 L1008.3 523.9" stroke="#000" stroke-width="1.2"/>
<text x="1004.8" y="522.4" font-size="6" text-anchor="middle" transform="rotate(-90 1004.8 522.4)">2</text>
<path d="M926.3 578 H971.4 V590 L969.0 593.5 H928.6 L926.3 590Z" fill="none" stroke="#000" stroke-width="2.9"/>
<path d="M937.4 577.0 L937.4 594.0" stroke="#000" stroke-width="2.6"/>
<path d="M959.8 577.0 L959.8 594.0" stroke="#000" stroke-width="2.6"/>
<path d="M937.4 592.5 Q948.7 588.5 959.8 592.5" fill="none" stroke="#000" stroke-width="2"/>
<path d="M926.3 590.5 Q931.5 590 937.4 592.5 M959.8 592.5 Q966.0 590 971.4 590.5" fill="none" stroke="#000" stroke-width="2"/>
<rect x="932.70" y="596.60" width="31.90" height="24.60" fill="none" stroke="#000" stroke-width="2.9"/>
<rect x="933.00" y="621.80" width="31.30" height="5.50" fill="#000"/>
<rect x="935.00" y="623.00" width="27.00" height="1.20" fill="#ddd5ae"/>
<rect x="942.30" y="627.80" width="12.60" height="4.40" fill="#000"/>
<rect x="944.50" y="629.20" width="8.20" height="1.10" fill="#ddd5ae"/>
<path d="M944.0 632.0 L944.0 647.0" stroke="#000" stroke-width="0.9"/>
<path d="M953.3 632.0 L953.3 647.0" stroke="#000" stroke-width="0.9"/>
<path d="M941.0 648.5 L956.0 648.5" stroke="#000" stroke-width="0.9"/>
<path d="M941.5 650.5 L945.5 646.5" stroke="#000" stroke-width="1.2"/>
<path d="M952.0 650.5 L956.0 646.5" stroke="#000" stroke-width="1.2"/>
<text x="948.7" y="646.8" font-size="5.3" text-anchor="middle" >ф6</text>
<path d="M934.0 627.0 L934.0 661.5" stroke="#000" stroke-width="0.9"/>
<path d="M963.3 627.0 L963.3 661.5" stroke="#000" stroke-width="0.9"/>
<path d="M933.3 660.8 L963.3 660.8" stroke="#000" stroke-width="0.9"/>
<path d="M932.0 662.8 L936.0 658.8" stroke="#000" stroke-width="1.2"/>
<path d="M961.3 662.8 L965.3 658.8" stroke="#000" stroke-width="1.2"/>
<text x="948.7" y="658.0" font-size="5.5" text-anchor="middle" >ф17,8</text>
<path d="M932.6 622.0 L932.6 670.5" stroke="#000" stroke-width="0.9"/>
<path d="M964.6 622.0 L964.6 670.5" stroke="#000" stroke-width="0.9"/>
<path d="M931.9 669.9 L965.3 669.9" stroke="#000" stroke-width="0.9"/>
<path d="M930.6 671.9 L934.6 667.9" stroke="#000" stroke-width="1.2"/>
<path d="M962.6 671.9 L966.6 667.9" stroke="#000" stroke-width="1.2"/>
<text x="948.7" y="667.6" font-size="5.5" text-anchor="middle" >20х1,5</text>
<path d="M908.1 574.0 L908.1 680.0" stroke="#000" stroke-width="0.9"/>
<path d="M989.8 574.0 L989.8 680.0" stroke="#000" stroke-width="0.9"/>
<path d="M907.1 678.9 L990.8 678.9" stroke="#000" stroke-width="0.9"/>
<path d="M906.1 680.9 L910.1 676.9" stroke="#000" stroke-width="1.2"/>
<path d="M987.8 680.9 L991.8 676.9" stroke="#000" stroke-width="1.2"/>
<text x="948.7" y="677.6" font-size="5.5" text-anchor="middle" >50</text>
<path d="M966.0 623.2 L991.8 623.2" stroke="#000" stroke-width="0.9"/>
<path d="M966.0 628.2 L991.8 628.2" stroke="#000" stroke-width="0.9"/>
<path d="M987.8 625.2 L991.8 621.2" stroke="#000" stroke-width="1.2"/>
<path d="M987.8 630.2 L991.8 626.2" stroke="#000" stroke-width="1.2"/>
<text x="988.3" y="631.8" font-size="6" text-anchor="middle" transform="rotate(-90 988.3 631.8)">2</text>
<path d="M948.7 447.9 V646.5" stroke="#2a22c8" stroke-width="1.1" stroke-dasharray="9 2 1.5 2"/>
<path d="M1312.0 444.2 L1346.6 444.2" stroke="#000" stroke-width="0.9"/>
<path d="M1310.7 446.2 L1314.7 442.2" stroke="#000" stroke-width="1.2"/>
<path d="M1343.2 446.2 L1347.2 442.2" stroke="#000" stroke-width="1.2"/>
<path d="M1312.7 442.0 L1312.7 455.0" stroke="#000" stroke-width="0.9"/>
<path d="M1345.2 442.0 L1345.2 455.0" stroke="#000" stroke-width="0.9"/>
<text x="1328.8" y="442.0" font-size="5.5" text-anchor="middle" >М20х1,5</text>
<path d="M1305.3 454.8 H1353.2 L1356.2 457.8 V503.3 L1353.2 506.3 H1305.3 L1302.3 503.3 V457.8Z" fill="#000"/>
<rect x="1304.8" y="458.7" width="48.6" height="43.3" fill="url(#h)"/>
<rect x="1314.90" y="458.70" width="28.80" height="28.30" fill="#ddd5ae"/>
<rect x="1314.90" y="487.00" width="2.80" height="15.00" fill="#000"/>
<rect x="1340.40" y="487.00" width="2.90" height="15.00" fill="#000"/>
<path d="M1304.8 488.0 L1314.9 488.0" stroke="#000" stroke-width="0.8"/>
<path d="M1343.7 488.0 L1353.4 488.0" stroke="#000" stroke-width="0.8"/>
<path d="M1313.8 459.0 L1313.8 487.0" stroke="#000" stroke-width="0.8"/>
<path d="M1344.7 459.0 L1344.7 487.0" stroke="#000" stroke-width="0.8"/>
<path d="M1347.0 472 L1374.0 439 H1380.3" fill="none" stroke="#000" stroke-width="1"/>
<text x="1380.8" y="442.2" font-size="6.5" text-anchor="start" >S27</text>
<rect x="1325.20" y="506.00" width="7.70" height="110.00" fill="#000"/>
<path d="M1303.7 619.5 L1306.5 617 H1352.0 L1354.5 619.5 V640.6 H1303.7Z" fill="none" stroke="#000" stroke-width="2.9"/>
<path d="M1316.5 617.0 L1316.5 641.0" stroke="#000" stroke-width="2.6"/>
<path d="M1341.6 617.0 L1341.6 641.0" stroke="#000" stroke-width="2.6"/>
<path d="M1316.5 619.5 Q1329.0 617 1341.6 619.5" fill="none" stroke="#000" stroke-width="1.4"/>
<path d="M1348.0 628.2 L1374.5 594 H1381.4" fill="none" stroke="#000" stroke-width="1"/>
<text x="1382.0" y="596.6" font-size="6.5" text-anchor="start" >S27</text>
<rect x="1316.50" y="645.70" width="25.90" height="32.70" fill="none" stroke="#000" stroke-width="2.9"/>
<path d="M1316.5 647.7 L1342.4 647.7" stroke="#000" stroke-width="1.4"/>
<path d="M1313.0 649.0 L1313.0 716.0" stroke="#000" stroke-width="0.9"/>
<path d="M1345.4 649.0 L1345.4 716.0" stroke="#000" stroke-width="0.9"/>
<rect x="1325.60" y="679.80" width="7.00" height="13.20" fill="#000"/>
<path d="M1326.3 693.0 L1326.3 700.0" stroke="#000" stroke-width="0.9"/>
<path d="M1331.8 693.0 L1331.8 700.0" stroke="#000" stroke-width="0.9"/>
<path d="M1322.8 699.8 L1378.6 699.8" stroke="#000" stroke-width="0.9"/>
<path d="M1324.3 701.8 L1328.3 697.8" stroke="#000" stroke-width="1.2"/>
<path d="M1329.8 701.8 L1333.8 697.8" stroke="#000" stroke-width="1.2"/>
<text x="1371.7" y="696.0" font-size="5.8" text-anchor="middle" >ф3</text>
<path d="M1311.6 715.4 L1347.2 715.4" stroke="#000" stroke-width="0.9"/>
<path d="M1311.0 717.4 L1315.0 713.4" stroke="#000" stroke-width="1.2"/>
<path d="M1343.4 717.4 L1347.4 713.4" stroke="#000" stroke-width="1.2"/>
<text x="1329.0" y="712.0" font-size="5.5" text-anchor="middle" >М20х1,5</text>
<path d="M1271.0 456.3 L1302.3 456.3" stroke="#000" stroke-width="0.9"/>
<path d="M1273.5 456.3 L1273.5 691.0" stroke="#000" stroke-width="0.9"/>
<path d="M1271.9 691.0 L1325.6 691.0" stroke="#000" stroke-width="0.9"/>
<path d="M1271.5 458.3 L1275.5 454.3" stroke="#000" stroke-width="1.2"/>
<path d="M1271.5 693.0 L1275.5 689.0" stroke="#000" stroke-width="1.2"/>
<text x="1270.6" y="594.0" font-size="5.5" text-anchor="middle" transform="rotate(-90 1270.6 594.0)">1123</text>
<path d="M1289.4 488.5 L1302.3 488.5" stroke="#000" stroke-width="0.9"/>
<path d="M1291.3 488.5 L1291.3 679.4" stroke="#000" stroke-width="0.9"/>
<path d="M1289.3 679.4 L1315.0 679.4" stroke="#000" stroke-width="0.9"/>
<path d="M1289.3 490.5 L1293.3 486.5" stroke="#000" stroke-width="1.2"/>
<path d="M1289.3 681.4 L1293.3 677.4" stroke="#000" stroke-width="1.2"/>
<text x="1288.3" y="579.0" font-size="5.5" text-anchor="middle" transform="rotate(-90 1288.3 579.0)">1108</text>
<path d="M1329.1 450.0 V700.0" stroke="#2a22c8" stroke-width="1.2" stroke-dasharray="9 2 1.5 2"/>
</svg>
<svg class="a" style="left:0;top:0" width="1494" height="1039" viewBox="0 0 1494 1039">
<!-- viewport overlays -->
<text x="6.5" y="195.3" font-family="Liberation Sans" font-size="12" fill="#2a2820" textLength="125" lengthAdjust="spacingAndGlyphs">[−][Сверху][2D-каркас]</text>
<!-- window buttons -->
<rect x="1429" y="192" width="11.5" height="4.5" fill="#f0ede2" stroke="#5e5a4c" stroke-width="1"/>
<rect x="1452.5" y="187" width="8" height="8" fill="#f0ede2" stroke="#5e5a4c" stroke-width="1"/>
<rect x="1449.8" y="189.8" width="8" height="8" fill="#f0ede2" stroke="#5e5a4c" stroke-width="1"/>
<rect x="1452.3" y="192.3" width="3" height="3" fill="#8a8678"/>
<path d="M1470.5 188.5 L1479.5 196.5 M1479.5 188.5 L1470.5 196.5" stroke="#5e5a4c" stroke-width="3.8"/>
<path d="M1470.5 188.5 L1479.5 196.5 M1479.5 188.5 L1470.5 196.5" stroke="#f0ede2" stroke-width="2.2"/>
<!-- viewcube -->
<circle cx="1408" cy="283" r="52.6" fill="none" stroke="#e2dbbd" stroke-width="13"/>
<rect x="1382.5" y="257.5" width="51" height="51" fill="#e8e4d2" stroke="#8c8874" stroke-width="1"/>
<rect x="1392" y="267" width="32" height="32" fill="#d6d4c8"/>
<text x="1408" y="288.5" font-family="Liberation Sans" font-size="16" text-anchor="middle" fill="#8a887c" textLength="45" lengthAdjust="spacingAndGlyphs">Сверху</text>
<g font-family="Liberation Sans" font-size="25" text-anchor="middle" fill="none" stroke="#8f8b79" stroke-width="1.8">
<text x="0" y="0" transform="translate(1407.5 235.3) scale(.8 1)">С</text>
<text x="0" y="0" transform="translate(1351.4 292.4) scale(.8 1)">З</text>
<text x="0" y="0" transform="translate(1464.3 292.4) scale(.8 1)">В</text>
<text x="0" y="0" transform="translate(1407.9 349.5) scale(.8 1)">Ю</text>
</g>
<g font-family="Liberation Sans" font-size="25" text-anchor="middle" fill="#e3ddc5">
<text x="0" y="0" transform="translate(1407.5 235.3) scale(.8 1)">С</text>
<text x="0" y="0" transform="translate(1351.4 292.4) scale(.8 1)">З</text>
<text x="0" y="0" transform="translate(1464.3 292.4) scale(.8 1)">В</text>
<text x="0" y="0" transform="translate(1407.9 349.5) scale(.8 1)">Ю</text>
</g>
<rect x="1384" y="370.5" width="45.5" height="15.5" rx="3" fill="#e4dcc0"/>
<text x="1388" y="382.5" font-family="Liberation Sans" font-size="11" fill="#8d8a7c">МСК</text>
<path d="M1416 376 H1425 L1420.5 381Z" fill="none" stroke="#9d9a8c" stroke-width=".9"/>
<!-- UCS -->
<g stroke="#1c1a14" stroke-width="1.1" fill="none">
<path d="M23.5 936 V986.2 H74"/>
<rect x="19.3" y="981.3" width="9.4" height="9.4"/>
<path d="M25.1 918.7 L31.5 925.5 L37.9 918.7 M31.5 925.5 V932"/>
<path d="M78.1 972.2 L90.9 985 M90.9 972.2 L78.1 985"/>
</g>
<!-- crosshair -->
<g stroke="#1c1a14" stroke-width="1.1" fill="none">
<path d="M1452.5 916 V961.2 M1452.5 967.6 V1007 M1404.3 964.3 H1449.3 M1455.7 964.3 H1491"/>
<rect x="1449.4" y="961.2" width="6.3" height="6.3"/>
</g>
<!-- status bar groups -->
<g fill="#3b4453">
<rect x="843" y="1009" width="56" height="24"/>
<rect x="902" y="1009" width="63" height="24"/>
<rect x="968" y="1009" width="102" height="24"/>
<rect x="1072" y="1009" width="62" height="24"/>
<rect x="1136" y="1009" width="22" height="24"/><rect x="1161" y="1009" width="22" height="24"/><rect x="1188" y="1009" width="22" height="24"/>
<rect x="1214.5" y="1009" width="104" height="24"/>
<rect x="1321.7" y="1009" width="39" height="24"/>
<rect x="1362.2" y="1009" width="24" height="24"/>
<rect x="1389" y="1009" width="24.2" height="24"/>
<rect x="1415.7" y="1009" width="22.5" height="24"/>
<rect x="1441" y="1009" width="48" height="24"/>
</g>
<g fill="#5a8cc6">
<rect x="993" y="1010" width="22" height="22"/>
<rect x="1072" y="1010" width="22" height="22"/>
<rect x="1096" y="1010" width="22" height="22"/>
<rect x="1136" y="1010" width="22" height="22"/>
<rect x="1161" y="1010" width="22" height="22"/>
<rect x="1188" y="1010" width="22" height="22"/>
<rect x="1214.5" y="1010" width="22.5" height="22"/>
</g>

<text x="846" y="1025.5" font-family="Liberation Sans" font-size="12.5" fill="#e8eaee" textLength="50" lengthAdjust="spacingAndGlyphs">МОДЕЛЬ</text>
<g stroke="#e6e8ec" stroke-width="1.3" fill="none">
<path d="M906 1016.5 H921 M906 1021 H921 M906 1025.5 H921 M909.5 1013 V1028 M914 1013 V1028 M918.5 1013 V1028"/>
<path d="M973 1013 V1028 H988 M973 1022.5 H978 V1028"/>
<circle cx="1000.5" cy="1022.5" r="6.3"/><path d="M996 1021.5 H1011 M1001.5 1021.5 L1008.5 1013.5"/>
<path d="M1076 1027 H1091 M1076 1027 L1087 1015"/>
<rect x="1100.5" y="1015.5" width="14" height="13.5"/>
<path d="M1041.5 1013 V1028" stroke="#6cc98a"/><path d="M1035.5 1014 L1049 1027" stroke="#e2555f"/>
<path d="M1141 1014.5 H1156 M1141 1019 H1156 M1141 1024 H1156"/>
<path d="M1193 1013 V1028 H1207 M1190.5 1016 L1193 1013 L1195.5 1016 M1204 1025.5 L1207 1028 L1204 1030.5"/>
<path d="M1367 1021.5 H1382.5 M1374.7 1013.5 V1029.5" stroke-width="1.8"/>
<rect x="1393.5" y="1012.5" width="6.5" height="6.5"/><circle cx="1407" cy="1019.5" r="3.5"/><path d="M1400 1022 L1396.5 1028 H1403.5Z"/>
<rect x="1445.5" y="1015" width="15.5" height="12"/>
<path d="M1449 1024 L1452 1021 M1457 1018.5 L1454 1021.5" stroke-width="1.1"/>
</g>
<g fill="#e6e8ec">

<circle cx="1041.5" cy="1021" r="2.2" fill="#3b4453" stroke="#e6e8ec" stroke-width="1"/>
<rect x="1083" y="1019.5" width="3" height="3"/>
<rect x="1099" y="1013.5" width="4" height="4" fill="#5a8cc6" stroke="#e6e8ec" stroke-width="1.2"/>
<rect x="1139" y="1013.5" width="16" height="1.6"/><rect x="1139" y="1013.2" width="8" height="2.2"/><rect x="1139" y="1018" width="16" height="1.6"/><rect x="1139" y="1017.5" width="8" height="3"/><rect x="1139" y="1023" width="16" height="1.6"/><rect x="1139" y="1022.5" width="8" height="4"/>
<rect x="1169.5" y="1018.5" width="11.5" height="11"/><path d="M1166 1012 V1018 M1163 1015 H1169" stroke="#e6e8ec" stroke-width="1.3"/><path d="M1168 1017 H1177" stroke="#e6e8ec" stroke-width="1.2"/>
<path d="M1200 1014 L1197 1020 H1200 L1198 1025 L1203 1018 H1200Z"/>
<g transform="translate(1225.5,1021)"><path d="M0 -8 L2.5 -2 L7 6 L0 3 L-7 6 L-2.5 -2Z"/></g><circle cx="1233.5" cy="1015" r="2.5" fill="none" stroke="#e6e8ec" stroke-width="1"/>
<g transform="translate(1249,1021)"><path d="M0 -8 L2.5 -2 L7 6 L0 3 L-7 6 L-2.5 -2Z"/></g><path d="M1254 1012 L1252 1016 H1254 L1252.5 1019 L1256.5 1015 H1254.5Z"/>
<g transform="translate(1274,1021)"><path d="M0 -8 L2.5 -2 L7 6 L0 3 L-7 6 L-2.5 -2Z"/></g>
<circle cx="1333.5" cy="1020.5" r="6.5"/><g stroke="#e6e8ec" stroke-width="2.5"><path d="M1333.5 1012.5 V1028.5 M1325.5 1020.5 H1341.5 M1327.8 1014.8 L1339.2 1026.2 M1339.2 1014.8 L1327.8 1026.2"/></g><circle cx="1333.5" cy="1020.5" r="2.5" fill="#3b4453"/>
<rect x="1469" y="1013.5" width="16" height="2"/><rect x="1469" y="1019.5" width="16" height="2"/><rect x="1469" y="1025.5" width="16" height="2"/>
</g>
<text x="1290.5" y="1025.5" font-family="Liberation Sans" font-size="12" font-weight="bold" fill="#dfe2e7" textLength="13" lengthAdjust="spacingAndGlyphs">1:1</text>
<g fill="#dfe3e8">
<path d="M953.5 1019 H961 L957.3 1023.5Z"/><path d="M1019.8 1019 H1027.3 L1023.6 1023.5Z"/><path d="M1058.8 1019 H1066.3 L1062.6 1023.5Z"/><path d="M1122.6 1019 H1130.1 L1126.4 1023.5Z"/><path d="M1307.7 1019 H1315.2 L1311.5 1023.5Z"/><path d="M1350 1019 H1357.5 L1353.8 1023.5Z"/>
</g>
<g fill="#e6e8ec"><circle cx="932.5" cy="1015" r="1.2"/><circle cx="938" cy="1015" r="1.2"/><circle cx="943.5" cy="1015" r="1.2"/><circle cx="932.5" cy="1020.5" r="1.2"/><circle cx="938" cy="1020.5" r="1.2"/><circle cx="943.5" cy="1020.5" r="1.2"/><circle cx="932.5" cy="1026" r="1.2"/><circle cx="938" cy="1026" r="1.2"/><circle cx="943.5" cy="1026" r="1.2"/></g>
<path d="M1419 1013 H1428 L1433 1018 V1024 H1419Z" fill="#3a6fb4"/><path d="M1419 1021 H1425 V1027 H1419Z" fill="#f4c240"/><path d="M1426 1024 L1429 1027 L1435 1020" stroke="#4fbf6a" stroke-width="2" fill="none"/><path d="M1422 1013 V1021 M1419 1016 H1428" stroke="#fff" stroke-width="1.1"/>
</svg>

</body></html>
